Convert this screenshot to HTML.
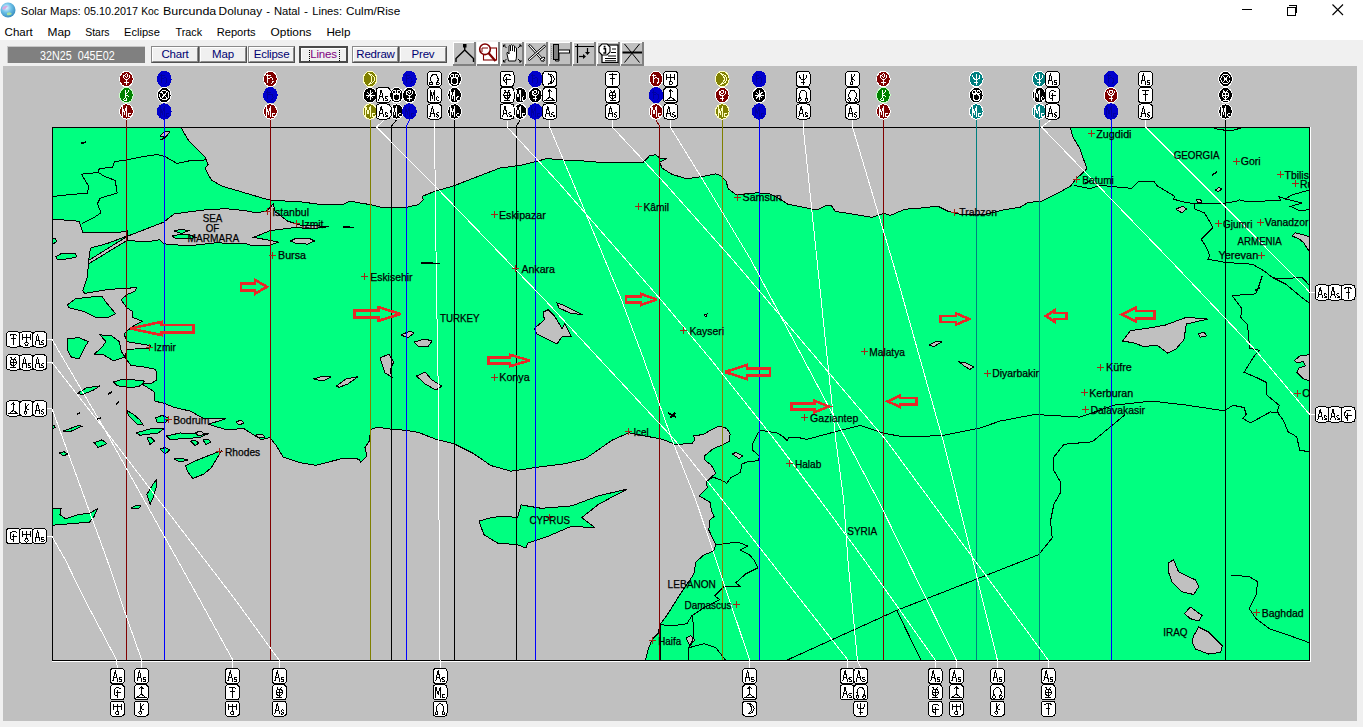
<!DOCTYPE html>
<html><head><meta charset="utf-8"><title>Solar Maps</title>
<style>
html,body{margin:0;padding:0;width:1363px;height:727px;overflow:hidden;background:#f0f0f0;font-family:"Liberation Sans",sans-serif;}
#title{position:absolute;left:0;top:0;width:1363px;height:22px;}
#menu{position:absolute;left:0;top:0;width:1363px;height:40px;background:#fff;}
.mi{position:absolute;top:2.5px;font-size:12px;color:#000;}
#tb{position:absolute;left:0;top:40px;width:1363px;height:26px;background:#f0f0f0;}
svg{position:absolute;left:0;top:0;}
</style></head><body>

<div id="menu"></div>
<div id="title"><svg width="16" height="16" style="position:absolute;left:0px;top:2px" viewBox="0 0 16 16"><defs><radialGradient id="gl" cx="40%" cy="35%" r="65%"><stop offset="0" stop-color="#e8f4ff"/><stop offset="0.5" stop-color="#6cc0e8"/><stop offset="1" stop-color="#3a8fc0"/></radialGradient></defs><circle cx="8" cy="8" r="7.5" fill="url(#gl)"/><path d="M2 6 Q5 3 8 4 Q6 7 3 8Z" fill="#d8a8e0"/><path d="M7 11 Q10 9 12 12 Q9 14 7 13Z" fill="#a8e0a0"/></svg><svg width="420" height="40" style="position:absolute;left:0;top:0" font-family="Liberation Sans, sans-serif" font-size="11.5" fill="#000"><text x="20.7" y="14.5" textLength="26.1" lengthAdjust="spacingAndGlyphs">Solar</text><text x="50" y="14.5" textLength="30.7" lengthAdjust="spacingAndGlyphs">Maps:</text><text x="83.9" y="14.5" textLength="54.1" lengthAdjust="spacingAndGlyphs">05.10.2017</text><text x="141.2" y="14.5" textLength="17.8" lengthAdjust="spacingAndGlyphs">Koc</text><text x="163" y="14.5" textLength="53.3" lengthAdjust="spacingAndGlyphs">Burcunda</text><text x="218.6" y="14.5" textLength="43.5" lengthAdjust="spacingAndGlyphs">Dolunay</text><text x="266.2" y="14.5" textLength="3.8" lengthAdjust="spacingAndGlyphs">-</text><text x="273.9" y="14.5" textLength="26.1" lengthAdjust="spacingAndGlyphs">Natal</text><text x="304" y="14.5" textLength="4.0" lengthAdjust="spacingAndGlyphs">-</text><text x="312.2" y="14.5" textLength="29.8" lengthAdjust="spacingAndGlyphs">Lines:</text><text x="346" y="14.5" textLength="54.2" lengthAdjust="spacingAndGlyphs">Culm/Rise</text><text x="4.6" y="35.9" textLength="28.2" lengthAdjust="spacingAndGlyphs">Chart</text><text x="47.5" y="35.9" textLength="23.2" lengthAdjust="spacingAndGlyphs">Map</text><text x="85.2" y="35.9" textLength="24.4" lengthAdjust="spacingAndGlyphs">Stars</text><text x="124.1" y="35.9" textLength="35.7" lengthAdjust="spacingAndGlyphs">Eclipse</text><text x="175.6" y="35.9" textLength="26.5" lengthAdjust="spacingAndGlyphs">Track</text><text x="216.7" y="35.9" textLength="39.0" lengthAdjust="spacingAndGlyphs">Reports</text><text x="270.6" y="35.9" textLength="40.9" lengthAdjust="spacingAndGlyphs">Options</text><text x="326.4" y="35.9" textLength="24.1" lengthAdjust="spacingAndGlyphs">Help</text></svg><div style="position:absolute;left:1242px;top:9px;width:10px;height:1px;background:#000"></div><div style="position:absolute;left:1287px;top:7px;width:7px;height:7px;border:1px solid #000;background:#fff"></div><div style="position:absolute;left:1289px;top:5px;width:7px;height:7px;border-top:1px solid #000;border-right:1px solid #000;"></div><svg width="12" height="12" style="position:absolute;left:1332px;top:4px" viewBox="0 0 12 12"><path d="M0.5 0.5 L11 11 M11 0.5 L0.5 11" stroke="#000" stroke-width="1.1"/></svg></div>
<div id="tb"></div><div style="position:absolute;left:7px;top:46px;width:138px;height:17px;background:#808080;border-top:1px solid #c8c8c8;border-left:1px solid #c8c8c8;box-sizing:border-box;color:#fff;font-size:12.5px;line-height:16px;"><span style="position:absolute;left:32px;top:0.5px;transform:scaleX(0.86);transform-origin:0 0;white-space:nowrap">32N25&nbsp;&nbsp;045E02</span></div><div style="position:absolute;left:151px;top:46px;width:48px;height:17px;box-sizing:border-box;border:1px solid #8a8a8a;border-right-color:#505050;border-bottom-color:#505050;background:#f0f0f0;"><div style="position:absolute;left:0;top:0;right:0;bottom:0;border-top:1px solid #fff;border-left:1px solid #fff;border-right:1px solid #8a8a8a;border-bottom:1px solid #8a8a8a"></div><div style="position:absolute;left:0;top:0;width:100%;text-align:center;font-size:11.5px;line-height:15px;color:#000070;letter-spacing:-0.2px">Chart</div></div><div style="position:absolute;left:199px;top:46px;width:48px;height:17px;box-sizing:border-box;border:1px solid #8a8a8a;border-right-color:#505050;border-bottom-color:#505050;background:#f0f0f0;"><div style="position:absolute;left:0;top:0;right:0;bottom:0;border-top:1px solid #fff;border-left:1px solid #fff;border-right:1px solid #8a8a8a;border-bottom:1px solid #8a8a8a"></div><div style="position:absolute;left:0;top:0;width:100%;text-align:center;font-size:11.5px;line-height:15px;color:#000070;letter-spacing:-0.2px">Map</div></div><div style="position:absolute;left:248px;top:46px;width:47px;height:17px;box-sizing:border-box;border:1px solid #8a8a8a;border-right-color:#505050;border-bottom-color:#505050;background:#f0f0f0;"><div style="position:absolute;left:0;top:0;right:0;bottom:0;border-top:1px solid #fff;border-left:1px solid #fff;border-right:1px solid #8a8a8a;border-bottom:1px solid #8a8a8a"></div><div style="position:absolute;left:0;top:0;width:100%;text-align:center;font-size:11.5px;line-height:15px;color:#000070;letter-spacing:-0.2px">Eclipse</div></div><div style="position:absolute;left:299px;top:46px;width:49px;height:17px;box-sizing:border-box;border:2px solid #4a4a4a;background:#f0f0f0;"><div style="position:absolute;left:0;top:0;right:0;bottom:0;border-top:1px solid #fff;border-left:1px solid #fff;"></div><span style="position:absolute;left:8px;top:2px;width:29px;height:11px;border-left:1px dotted #000;border-right:1px dotted #000"></span><div style="position:absolute;left:0;top:0;width:100%;text-align:center;font-size:11.5px;line-height:13px;color:#800080;letter-spacing:-0.2px">Lines</div></div><div style="position:absolute;left:352px;top:46px;width:47px;height:17px;box-sizing:border-box;border:1px solid #8a8a8a;border-right-color:#505050;border-bottom-color:#505050;background:#f0f0f0;"><div style="position:absolute;left:0;top:0;right:0;bottom:0;border-top:1px solid #fff;border-left:1px solid #fff;border-right:1px solid #8a8a8a;border-bottom:1px solid #8a8a8a"></div><div style="position:absolute;left:0;top:0;width:100%;text-align:center;font-size:11.5px;line-height:15px;color:#000070;letter-spacing:-0.2px">Redraw</div></div><div style="position:absolute;left:399px;top:46px;width:48px;height:17px;box-sizing:border-box;border:1px solid #8a8a8a;border-right-color:#505050;border-bottom-color:#505050;background:#f0f0f0;"><div style="position:absolute;left:0;top:0;right:0;bottom:0;border-top:1px solid #fff;border-left:1px solid #fff;border-right:1px solid #8a8a8a;border-bottom:1px solid #8a8a8a"></div><div style="position:absolute;left:0;top:0;width:100%;text-align:center;font-size:11.5px;line-height:15px;color:#000070;letter-spacing:-0.2px">Prev</div></div><svg width="23" height="24" style="position:absolute;left:453px;top:42px" viewBox="0 0 23 24"><rect x="0" y="0" width="23" height="24" fill="#c0c0c0"/><rect x="0" y="0" width="23" height="1" fill="#fff"/><rect x="0" y="0" width="1" height="24" fill="#fff"/><rect x="0" y="22" width="23" height="2" fill="#808080"/><rect x="21" y="0" width="2" height="24" fill="#808080"/><rect x="10" y="2" width="3.5" height="3.5" fill="#000"/><path d="M11.75 5 V8 L3 16.5 V20 M11.75 8 L20.5 16.5 V20" fill="none" stroke="#000" stroke-width="1.4"/></svg><svg width="23" height="24" style="position:absolute;left:477px;top:42px" viewBox="0 0 23 24"><rect x="0" y="0" width="23" height="24" fill="#ffffff"/><rect x="0" y="0" width="23" height="1" fill="#fff"/><rect x="0" y="0" width="1" height="24" fill="#fff"/><rect x="0" y="22" width="23" height="2" fill="#808080"/><rect x="21" y="0" width="2" height="24" fill="#808080"/><rect x="6.5" y="6" width="13" height="12" fill="none" stroke="#800000" stroke-width="1.1"/><circle cx="8" cy="7.3" r="5.3" fill="#fff" stroke="#800000" stroke-width="1.6"/><path d="M11.5 11 L18.5 19" stroke="#800000" stroke-width="2.2"/><path d="M5 6 H11 M5 6 V10" stroke="#800000" stroke-width="1"/></svg><svg width="23" height="24" style="position:absolute;left:501px;top:42px" viewBox="0 0 23 24"><rect x="0" y="0" width="23" height="24" fill="#c0c0c0"/><rect x="0" y="0" width="23" height="1" fill="#fff"/><rect x="0" y="0" width="1" height="24" fill="#fff"/><rect x="0" y="22" width="23" height="2" fill="#808080"/><rect x="21" y="0" width="2" height="24" fill="#808080"/><path d="M7.5 19 L6 12 Q5.5 10 7 10.5 L8 12 V4 Q8.5 2.5 9.5 4 V9 V3.5 Q10.5 2 11.5 3.5 V9 V4 Q12.5 2.5 13.5 4 V9.5 V6 Q14.5 4.5 15.5 6 V14 Q15.5 17 14.5 19 Z" fill="#fff" stroke="#000" stroke-width="1"/><path d="M2.5 3 L5.5 6 M2.5 3 H4.5 M2.5 3 V5 M20 3 L17 6 M20 3 H18 M20 3 V5 M2.5 20 L5.5 17 M2.5 20 H4.5 M2.5 20 V18 M20 20 L17 17 M20 20 H18 M20 20 V18" fill="none" stroke="#000" stroke-width="1"/></svg><svg width="23" height="24" style="position:absolute;left:525px;top:42px" viewBox="0 0 23 24"><rect x="0" y="0" width="23" height="24" fill="#c0c0c0"/><rect x="0" y="0" width="23" height="1" fill="#fff"/><rect x="0" y="0" width="1" height="24" fill="#fff"/><rect x="0" y="22" width="23" height="2" fill="#808080"/><rect x="21" y="0" width="2" height="24" fill="#808080"/><path d="M3.5 3.5 L5 2.5 L19.5 18.5 L18 19.5 Z" fill="#fff" stroke="#000" stroke-width="1"/><path d="M19.5 3 L20.5 4.5 L4.5 18.5 L3 17.5 Z" fill="#fff" stroke="#000" stroke-width="1"/><path d="M15 17 L19 15 L20 16 L17 19.5Z" fill="#fff" stroke="#000" stroke-width="1"/></svg><svg width="23" height="24" style="position:absolute;left:549px;top:42px" viewBox="0 0 23 24"><rect x="0" y="0" width="23" height="24" fill="#c0c0c0"/><rect x="0" y="0" width="23" height="1" fill="#fff"/><rect x="0" y="0" width="1" height="24" fill="#fff"/><rect x="0" y="22" width="23" height="2" fill="#808080"/><rect x="21" y="0" width="2" height="24" fill="#808080"/><rect x="4.5" y="2.5" width="5" height="15" fill="#808080" stroke="#000" stroke-width="1"/><rect x="9.5" y="8" width="11" height="3" fill="#fff" stroke="#000" stroke-width="1"/><path d="M6.5 17.5 V19 H10 V11" fill="none" stroke="#000" stroke-width="1"/><path d="M2.5 4 V17" stroke="#909090" stroke-width="1" stroke-dasharray="1 1"/></svg><svg width="23" height="24" style="position:absolute;left:573px;top:42px" viewBox="0 0 23 24"><rect x="0" y="0" width="23" height="24" fill="#c0c0c0"/><rect x="0" y="0" width="23" height="1" fill="#fff"/><rect x="0" y="0" width="1" height="24" fill="#fff"/><rect x="0" y="22" width="23" height="2" fill="#808080"/><rect x="21" y="0" width="2" height="24" fill="#808080"/><path d="M4.5 2 V21 M2 4.5 H21" stroke="#000" stroke-width="1.2"/><path d="M14.5 6 V11" stroke="#000" stroke-width="1.2"/><path d="M12 10 H17 L14.5 13 Z" fill="#000"/><path d="M6 14.5 H11" stroke="#000" stroke-width="1.2"/><path d="M10 12 V17 L13 14.5 Z" fill="#000"/></svg><svg width="23" height="24" style="position:absolute;left:597px;top:42px" viewBox="0 0 23 24"><rect x="0" y="0" width="23" height="24" fill="#c0c0c0"/><rect x="0" y="0" width="23" height="1" fill="#fff"/><rect x="0" y="0" width="1" height="24" fill="#fff"/><rect x="0" y="22" width="23" height="2" fill="#808080"/><rect x="21" y="0" width="2" height="24" fill="#808080"/><rect x="5" y="3" width="16" height="17.5" fill="#fff" stroke="#000" stroke-width="1.2"/><path d="M11 14 H19 M8 16.5 H19 M8 18.8 H19 M14 10.5 H19 M15 7 H19" stroke="#000" stroke-width="1.1"/><path d="M5 2 H10 L13 5 V10 L10 13 H5 L2 10 V5 Z" fill="#fff" stroke="#000" stroke-width="1.1"/><rect x="6.7" y="3.8" width="1.8" height="1.8" fill="#000"/><path d="M6.5 6.8 H8.5 V11 M6.3 11 H9.3" stroke="#000" stroke-width="1.4" fill="none"/></svg><svg width="23" height="24" style="position:absolute;left:621px;top:42px" viewBox="0 0 23 24"><rect x="0" y="0" width="23" height="24" fill="#c0c0c0"/><rect x="0" y="0" width="23" height="1" fill="#fff"/><rect x="0" y="0" width="1" height="24" fill="#fff"/><rect x="0" y="22" width="23" height="2" fill="#808080"/><rect x="21" y="0" width="2" height="24" fill="#808080"/><path d="M3.5 2 L18.5 20.5 M18.5 2 L3.5 20.5" stroke="#000" stroke-width="1"/><path d="M1.5 10.5 H21" stroke="#000" stroke-width="2"/></svg>
<svg width="1363" height="727" viewBox="0 0 1363 727" style="top:0;left:0" shape-rendering="crispEdges">
<rect x="3" y="66" width="1354" height="655" fill="#c0c0c0"/>
<defs><clipPath id="mc"><rect x="52" y="127" width="1258" height="534"/></clipPath></defs>
<g clip-path="url(#mc)" shape-rendering="crispEdges">
<rect x="52" y="127" width="1258" height="534" fill="#00ff80"/>
<polygon points="180.5,126.0 181.4,128.3 188.6,140.6 205.1,157.1 208.2,164.4 205.1,168.5 211.3,179.8 221.6,186.0 246.4,193.3 267.0,199.4 273.2,200.5 300.0,201.7 321.1,204.6 342.3,204.6 350.5,201.1 358.7,202.8 370.4,204.6 382.2,207.5 405.6,207.5 418.5,204.6 423.2,199.9 422.1,196.4 433.8,191.7 454.4,185.6 472.9,178.4 499.6,168.1 522.2,165.0 534.5,162.0 546.8,158.5 563.3,160.0 583.8,161.0 608.4,163.0 624.9,162.0 643.4,162.0 649.5,155.8 655.7,154.8 659.8,157.9 666.0,158.9 659.8,162.0 661.9,168.1 672.1,174.3 686.5,178.8 703.0,176.4 715.3,173.9 720.0,175.3 726.2,181.5 728.2,188.7 736.4,194.8 757.0,192.8 769.3,193.8 781.6,200.0 787.8,204.1 812.4,209.2 818.6,209.2 826.8,205.1 832.0,206.1 835.0,211.3 847.4,213.3 872.0,217.4 884.3,213.3 890.5,215.4 904.9,209.2 919.3,208.2 937.8,206.1 948.0,211.3 960.7,214.4 984.9,214.4 1001.1,210.4 1020.4,207.1 1028.5,202.3 1041.4,201.5 1057.6,193.4 1070.5,186.1 1075.3,179.7 1085.0,170.8 1086.9,168.4 1082.2,155.5 1079.8,148.5 1072.8,136.7 1070.4,127.8 1070.0,126.0" fill="#c0c0c0" stroke="#000" stroke-width="1"/>
<polygon points="126.7,236.5 163.8,222.1 174.1,213.9 205.1,209.8 225.7,208.7 246.4,210.8 256.7,212.9 267.0,210.8 273.2,204.0 275.2,211.8 287.6,221.1 300.0,225.0 329.4,226.5 314.7,228.5 293.3,227.7 270.2,230.6 253.8,237.3 278.9,242.2 270.2,245.0 250.0,245.0 246.4,243.8 215.4,242.8 188.6,245.9 163.8,243.8 159.7,239.7 147.3,241.7 126.7,240.5" fill="#c0c0c0" stroke="#000" stroke-width="1"/>
<polygon points="88.5,260.5 127.0,236.5 127.0,240.5 89.0,263.5" fill="#c0c0c0" stroke="#000" stroke-width="1"/>
<polygon points="51.0,219.0 78.9,221.2 80.8,226.0 82.7,232.7 107.8,232.7 125.1,231.8 127.0,230.8 127.0,236.0 107.8,243.3 90.4,248.1 88.5,261.6 87.5,277.0 82.7,290.5 84.7,293.4 107.8,289.5 136.7,287.6 134.7,291.5 127.0,294.4 121.2,300.0 127.0,307.8 132.8,311.7 132.8,317.5 142.4,321.3 134.7,325.2 127.0,331.0 124.0,334.0 127.0,341.6 150.0,345.5 150.0,348.0 127.0,349.5 125.0,357.0 130.9,365.6 142.4,366.6 155.9,369.5 156.9,380.0 150.0,384.0 140.5,383.0 154.0,391.6 155.0,401.2 163.6,403.2 173.2,407.0 181.0,409.0 190.0,411.0 204.0,418.7 226.0,418.7 208.5,424.2 226.0,429.7 243.7,428.6 261.3,439.6 270.0,437.4 276.7,446.2 283.3,457.2 300.0,462.7 315.6,465.3 327.9,462.2 344.3,458.0 358.7,459.1 360.8,462.2 367.0,456.0 364.9,447.8 369.0,441.6 371.0,429.3 377.2,427.2 391.6,429.3 406.0,430.3 418.3,432.4 436.8,439.6 453.6,443.6 473.8,453.7 490.7,465.5 510.9,471.2 537.9,467.2 564.8,463.8 585.0,458.8 595.2,452.0 612.0,440.2 628.9,432.8 640.0,435.1 659.3,438.6 666.1,440.6 675.8,444.8 681.3,444.1 692.3,443.4 695.0,439.3 693.6,435.8 699.1,435.1 704.6,433.8 711.5,429.6 718.4,426.2 726.7,428.3 730.1,433.8 729.4,441.3 722.5,444.8 712.9,448.9 704.6,455.8 704.6,459.9 711.5,465.4 715.7,473.6 710.2,477.8 706.0,481.9 707.4,487.4 703.3,491.5 699.1,495.7 710.2,502.5 711.5,510.8 714.3,516.3 710.0,520.0 708.8,530.0 715.8,545.0 713.8,551.0 703.8,555.0 695.9,561.9 693.9,573.9 685.9,585.8 677.9,597.8 667.9,613.8 660.0,624.7 658.0,633.7 652.0,639.7 648.0,649.7 645.0,662.0 51.0,662.0" fill="#c0c0c0" stroke="#000" stroke-width="1"/>
<polygon points="50.0,239.0 55.0,238.5 57.0,241.0 54.0,243.3 50.0,243.0" fill="#00ff80" stroke="#000" stroke-width="1"/>
<polygon points="50.0,426.0 54.0,425.5 55.5,427.5 52.0,428.5 50.0,428.0" fill="#00ff80" stroke="#000" stroke-width="1"/>
<polygon points="55.8,256.8 61.5,253.5 75.0,253.0 77.0,256.8 69.3,258.7 57.7,259.7" fill="#00ff80" stroke="#000" stroke-width="1"/>
<polygon points="67.3,305.0 75.0,299.0 88.5,297.2 102.0,296.3 105.8,302.0 115.5,313.6 107.8,317.5 96.2,317.5 84.7,311.7 69.3,307.8" fill="#00ff80" stroke="#000" stroke-width="1"/>
<polygon points="67.3,338.7 78.9,337.7 88.5,341.6 84.7,347.3 78.9,358.9 71.2,357.0 67.3,349.3" fill="#00ff80" stroke="#000" stroke-width="1"/>
<polygon points="100.0,334.8 111.6,335.8 119.3,341.6 121.2,351.2 125.0,357.0 113.5,360.8 104.0,355.0 94.3,354.0 102.0,347.3 105.8,341.6" fill="#00ff80" stroke="#000" stroke-width="1"/>
<polygon points="113.5,382.0 121.2,379.7 134.7,380.0 144.4,381.0 140.5,385.8 130.9,387.8 117.4,385.8" fill="#00ff80" stroke="#000" stroke-width="1"/>
<polygon points="77.0,393.5 86.6,387.8 100.0,385.8 94.3,389.7 82.7,394.5" fill="#00ff80" stroke="#000" stroke-width="1"/>
<polygon points="63.5,431.0 78.9,425.3 81.8,426.3 69.3,432.0" fill="#00ff80" stroke="#000" stroke-width="1"/>
<polygon points="94.3,442.7 102.0,439.8 106.8,443.6 98.1,447.5" fill="#00ff80" stroke="#000" stroke-width="1"/>
<polygon points="166.6,436.0 180.0,433.0 208.5,433.5 200.0,437.5 170.0,439.6" fill="#00ff80" stroke="#000" stroke-width="1"/>
<polygon points="135.8,433.0 150.0,429.0 164.4,428.6 158.0,433.0 140.0,435.2" fill="#00ff80" stroke="#000" stroke-width="1"/>
<polygon points="155.6,418.0 162.0,415.4 168.8,418.0 166.0,422.0 157.0,422.0" fill="#00ff80" stroke="#000" stroke-width="1"/>
<polygon points="221.6,450.7 210.0,455.0 195.0,461.0 185.5,466.0 188.0,472.0 192.7,478.6 204.0,474.0 211.0,468.0 216.0,460.0" fill="#00ff80" stroke="#000" stroke-width="1"/>
<polygon points="126.7,410.5 133.0,414.0 140.0,420.0 143.0,425.0 137.0,424.0 129.0,416.0" fill="#00ff80" stroke="#000" stroke-width="1"/>
<polygon points="147.3,438.0 151.0,437.3 154.5,441.0 150.0,444.5" fill="#00ff80" stroke="#000" stroke-width="1"/>
<polygon points="190.6,441.0 195.0,440.4 199.0,443.0 195.0,445.5" fill="#00ff80" stroke="#000" stroke-width="1"/>
<polygon points="203.0,440.0 208.0,439.4 211.0,442.0 206.0,444.5" fill="#00ff80" stroke="#000" stroke-width="1"/>
<polygon points="159.7,449.0 165.0,447.6 170.0,450.0 165.0,453.8" fill="#00ff80" stroke="#000" stroke-width="1"/>
<polygon points="174.0,459.0 180.0,458.0 187.5,460.0 180.0,462.0" fill="#00ff80" stroke="#000" stroke-width="1"/>
<polygon points="59.6,453.0 64.0,451.7 67.9,454.0 63.0,456.0" fill="#00ff80" stroke="#000" stroke-width="1"/>
<polygon points="146.8,494.6 153.4,483.6 156.7,479.2 156.7,485.8 153.4,496.8 150.1,504.5" fill="#00ff80" stroke="#000" stroke-width="1"/>
<polygon points="131.4,508.0 136.0,505.6 141.3,506.0 138.0,509.0" fill="#00ff80" stroke="#000" stroke-width="1"/>
<polygon points="50.0,507.8 61.0,508.9 59.9,514.4 65.4,518.8 78.6,514.4 89.6,513.3 97.3,508.9 94.0,516.6 89.6,522.1 76.4,523.2 63.2,524.3 50.0,525.4" fill="#00ff80" stroke="#000" stroke-width="1"/>
<polygon points="478.9,521.1 490.7,517.7 504.1,516.0 517.6,517.7 521.0,504.9 541.2,508.3 571.6,505.9 598.5,495.8 627.2,489.1 598.5,504.3 581.7,517.7 595.2,527.9 571.6,526.2 548.0,536.3 527.7,543.0 526.0,548.1 517.6,544.7 497.4,543.0 483.9,534.6" fill="#00ff80" stroke="#000" stroke-width="1"/>
<polygon points="174.0,231.0 181.0,229.4 188.6,230.5 182.0,233.5" fill="#00ff80" stroke="#000" stroke-width="1"/>
<polygon points="172.0,236.0 180.0,234.5 190.0,235.0 196.0,237.5 188.0,239.0 176.0,238.5" fill="#00ff80" stroke="#000" stroke-width="1"/>
<polygon points="534.2,328.7 544.4,319.8 543.1,312.2 548.2,309.6 554.5,316.0 562.2,328.7 564.7,323.6 571.1,336.4 562.2,336.4 557.1,344.0 546.9,338.9 536.7,333.8" fill="#c0c0c0" stroke="#000" stroke-width="1"/>
<polygon points="557.0,303.0 563.0,305.0 575.0,311.0 582.5,314.7 570.0,313.0 559.0,308.0" fill="#c0c0c0" stroke="#000" stroke-width="1"/>
<polygon points="1122.5,341.2 1130.5,330.6 1149.0,328.0 1165.0,325.2 1186.4,317.3 1207.7,319.1 1186.4,324.0 1183.8,339.9 1175.8,349.2 1167.8,353.2 1157.0,345.2 1143.8,346.6 1133.0,342.6" fill="#c0c0c0" stroke="#000" stroke-width="1"/>
<polygon points="1198.4,334.0 1204.0,331.9 1206.4,336.0 1200.0,337.2" fill="#c0c0c0" stroke="#000" stroke-width="1"/>
<polygon points="1292.0,236.1 1295.4,232.8 1305.3,235.3 1311.0,238.0 1311.0,254.0 1303.6,242.7 1298.7,238.6" fill="#c0c0c0" stroke="#000" stroke-width="1"/>
<polygon points="1294.5,360.3 1300.0,355.9 1308.8,354.8 1311.0,354.8 1311.0,381.1 1303.3,378.9 1296.7,372.3 1298.9,368.0 1305.5,365.8 1303.3,361.8 1296.7,362.5" fill="#c0c0c0" stroke="#000" stroke-width="1"/>
<polygon points="414.0,342.0 425.0,339.0 432.0,341.0 428.0,346.6 418.0,346.0" fill="#c0c0c0" stroke="#000" stroke-width="1"/>
<polygon points="416.6,376.0 425.0,372.0 432.0,380.0 442.0,386.0 436.0,390.0 425.0,384.0" fill="#c0c0c0" stroke="#000" stroke-width="1"/>
<polygon points="380.0,358.0 389.0,354.0 393.7,362.0 390.0,370.0 392.0,377.0 385.0,373.0 382.0,364.0" fill="#c0c0c0" stroke="#000" stroke-width="1"/>
<polygon points="401.0,335.0 410.0,331.0 414.0,333.0 408.0,337.7" fill="#c0c0c0" stroke="#000" stroke-width="1"/>
<polygon points="313.6,379.0 323.0,376.0 331.4,377.0 323.0,381.0" fill="#c0c0c0" stroke="#000" stroke-width="1"/>
<polygon points="336.5,386.0 346.0,379.0 358.0,376.6 348.0,384.0 339.0,387.3" fill="#c0c0c0" stroke="#000" stroke-width="1"/>
<polygon points="1168.4,563.1 1173.5,559.8 1178.5,571.6 1195.4,580.0 1198.7,586.7 1193.7,594.5 1181.9,591.8 1171.8,581.7 1168.4,571.6" fill="#c0c0c0" stroke="#000" stroke-width="1"/>
<polygon points="1184.6,613.7 1190.3,607.0 1202.0,615.4 1198.7,621.0 1190.3,618.7" fill="#c0c0c0" stroke="#000" stroke-width="1"/>
<polygon points="1193.7,635.6 1198.7,627.1 1208.8,632.2 1222.3,645.7 1220.6,652.4 1208.8,654.1 1195.4,649.0 1192.0,642.3" fill="#c0c0c0" stroke="#000" stroke-width="1"/>
<polygon points="290.4,241.0 296.0,238.3 310.0,238.8 314.5,241.0 308.0,244.1 296.0,243.5" fill="#c0c0c0" stroke="#000" stroke-width="1"/>
<polygon points="732.2,454.0 736.0,452.3 742.5,456.0 739.0,458.5" fill="#c0c0c0" stroke="#000" stroke-width="1"/>
<polygon points="160.0,136.0 165.0,131.0 170.0,132.0 166.0,136.5" fill="#c0c0c0" stroke="#000" stroke-width="1"/>
<polygon points="195.0,433.0 200.0,431.0 205.0,434.0 199.0,436.0" fill="#c0c0c0" stroke="#000" stroke-width="1"/>
<polygon points="236.0,422.0 241.0,420.0 244.0,423.0 239.0,425.0" fill="#c0c0c0" stroke="#000" stroke-width="1"/>
<polygon points="256.0,435.0 262.0,434.0 265.0,437.0 259.0,438.0" fill="#c0c0c0" stroke="#000" stroke-width="1"/>
<polygon points="929.0,345.0 936.0,341.4 941.8,342.0 934.0,346.5" fill="#c0c0c0" stroke="#000" stroke-width="1"/>
<polygon points="959.6,362.0 966.0,363.0 973.6,367.0 970.0,369.4 964.0,366.0" fill="#c0c0c0" stroke="#000" stroke-width="1"/>
<polygon points="704.0,315.0 707.0,314.0 706.0,317.0" fill="#c0c0c0" stroke="#000" stroke-width="1"/>
<polygon points="1196.0,200.0 1200.0,199.0 1202.0,202.0 1198.0,202.5" fill="#c0c0c0" stroke="#000" stroke-width="1"/>
<polygon points="1175.7,209.0 1183.0,206.4 1186.4,209.0 1182.0,213.0" fill="#c0c0c0" stroke="#000" stroke-width="1"/>
<polygon points="1215.3,190.0 1219.0,187.4 1221.9,189.0 1218.0,191.6" fill="#c0c0c0" stroke="#000" stroke-width="1"/>
<polygon points="686.0,638.0 691.0,635.7 694.6,640.0 690.0,645.8" fill="#c0c0c0" stroke="#000" stroke-width="1"/>
<polyline points="715.8,545.0 737.8,542.0 747.7,546.0 739.8,550.0 749.7,555.0 754.7,561.0 757.7,567.9 745.7,573.9 735.8,582.8 740.7,586.8 723.8,586.8 714.8,595.8 719.8,599.8 703.8,607.8 691.9,615.8 686.9,623.7 673.9,625.7 660.0,624.7" fill="none" stroke="#000" stroke-width="1"/>
<polyline points="691.9,615.8 693.9,627.7 692.9,639.7 688.9,647.7 688.9,661.0" fill="none" stroke="#000" stroke-width="1"/>
<polyline points="688.9,647.7 703.8,643.7 715.8,647.7 723.8,657.7 726.0,661.0" fill="none" stroke="#000" stroke-width="1"/>
<polyline points="660.0,624.7 660.0,661.0" fill="none" stroke="#000" stroke-width="1"/>
<polyline points="52.0,196.6 67.9,194.8 87.6,193.0 88.5,185.8 81.3,174.2 98.3,172.4 99.2,168.8 112.6,167.0 114.4,161.7 126.9,159.9 144.8,156.3 157.3,154.5 164.5,156.3 177.0,163.5 189.5,160.8 205.6,159.9" fill="none" stroke="#000" stroke-width="1"/>
<polyline points="98.3,172.4 103.7,176.0 115.3,180.5 117.1,193.0 100.1,198.3 97.4,203.7 101.0,212.7 94.7,217.1 82.2,223.4" fill="none" stroke="#000" stroke-width="1"/>
<polyline points="706.0,481.9 712.9,477.1 722.5,480.5 726.7,483.3 730.8,477.8 736.3,475.0 740.4,472.3 741.8,464.0 747.3,462.0 758.3,460.6 759.7,456.5 752.8,450.3 752.8,443.4 758.3,432.4 761.0,430.3 777.5,433.1 783.1,436.5 787.2,440.6 788.6,437.9 800.0,437.9 806.9,439.4 834.9,431.8 860.3,425.4 883.3,433.1 903.6,436.9 941.8,435.6 980.0,428.0 1000.0,421.1 1034.6,414.5 1079.9,417.1 1114.5,405.1 1151.8,401.1 1186.4,405.1 1224.2,410.8 1233.0,405.3 1244.0,407.5 1246.2,414.1 1242.9,418.5 1250.6,422.9 1270.4,411.9 1279.2,413.0" fill="none" stroke="#000" stroke-width="1"/>
<polyline points="1125.2,414.5 1094.5,440.0 1091.0,441.9 1064.0,444.3 1053.9,457.0 1053.9,470.5 1060.6,482.3 1060.6,492.4 1053.9,504.2 1050.5,521.0 1052.2,537.9 1038.7,554.7 1000.0,569.9 896.7,610.4 785.0,661.0" fill="none" stroke="#000" stroke-width="1"/>
<polyline points="896.7,610.4 921.4,661.0" fill="none" stroke="#000" stroke-width="1"/>
<polyline points="1230.7,575.0 1249.2,576.6 1257.7,581.7 1256.0,595.1 1249.2,608.6 1256.0,618.7 1269.4,628.8 1289.7,635.6 1308.2,642.3 1311.0,643.0" fill="none" stroke="#000" stroke-width="1"/>
<polyline points="1073.7,185.3 1089.9,188.6 1100.0,185.3 1131.5,188.4 1138.5,181.4 1153.8,181.4 1157.3,186.0 1160.0,187.4 1174.9,196.5 1173.2,199.0 1181.5,201.5 1194.7,203.9 1214.5,203.9 1224.4,203.1 1235.9,201.5 1239.2,199.8 1245.8,201.5 1280.5,200.6 1278.9,196.5 1285.5,199.0 1292.0,194.9 1311.0,189.5" fill="none" stroke="#000" stroke-width="1"/>
<polyline points="1285.5,199.0 1292.0,200.6 1302.0,203.1 1290.4,206.4 1298.7,210.5 1311.0,209.7" fill="none" stroke="#000" stroke-width="1"/>
<polyline points="1213.7,128.5 1230.0,131.0 1244.0,127.3" fill="none" stroke="#000" stroke-width="1"/>
<polyline points="1194.7,203.9 1194.7,208.9 1204.6,213.0 1209.5,221.3 1212.8,227.9 1207.9,232.8 1201.3,239.4 1204.6,244.4 1207.9,251.0 1209.5,255.9 1207.9,259.2 1226.0,262.5 1252.4,264.2 1264.0,270.8 1272.2,277.4 1285.5,284.0 1295.4,292.2 1303.6,298.9 1311.0,304.0" fill="none" stroke="#000" stroke-width="1"/>
<polyline points="1262.3,275.7 1259.0,285.6 1255.7,293.9 1232.6,295.5" fill="none" stroke="#000" stroke-width="1"/>
<polyline points="1272.2,277.4 1278.9,279.0 1302.0,277.4 1311.0,287.0" fill="none" stroke="#000" stroke-width="1"/>
<polyline points="1231.9,295.4 1241.8,308.6 1240.7,317.4 1247.3,324.0 1248.4,332.8 1249.5,348.2 1259.4,350.4 1255.0,354.8 1244.0,372.3 1257.2,377.8 1266.0,382.2 1266.0,394.3 1279.2,405.3 1277.0,411.9 1283.6,420.7 1288.0,431.7 1296.7,436.8 1299.8,450.3 1311.0,452.0" fill="none" stroke="#000" stroke-width="1"/>
</g>
<g shape-rendering="crispEdges">
<rect x="52" y="127" width="1258" height="1" fill="#000"/>
<rect x="52" y="127" width="1" height="534" fill="#000"/>
<rect x="1309" y="127" width="1" height="534" fill="#000"/>
<rect x="52" y="660" width="1258" height="1" fill="#000"/>
<rect x="1310" y="127" width="1" height="535" fill="#fff"/>
<rect x="52" y="661" width="1259" height="1" fill="#fff"/>
</g>
<polyline points="126.4,119 126.4,120 126.5,126 126.5,660" fill="none" stroke="#800000" stroke-width="1"/>
<polyline points="164.3,119 164.3,120 164.5,126 164.5,660" fill="none" stroke="#0000ff" stroke-width="1"/>
<polyline points="270.4,119 270.4,120 270.5,126 270.5,660" fill="none" stroke="#800000" stroke-width="1"/>
<polyline points="370.0,119 370.0,120 370.5,126 370.5,660" fill="none" stroke="#808000" stroke-width="1"/>
<polyline points="396.5,119 396.5,120 391.5,126 391.5,660" fill="none" stroke="#000000" stroke-width="1"/>
<polyline points="409.4,119 409.4,120 406.5,126 406.5,660" fill="none" stroke="#0000ff" stroke-width="1"/>
<polyline points="454.6,119 454.6,120 454.5,126 454.5,660" fill="none" stroke="#000000" stroke-width="1"/>
<polyline points="520.0,119 520.0,120 516.5,126 516.5,660" fill="none" stroke="#000000" stroke-width="1"/>
<polyline points="535.3,119 535.3,120 535.5,126 535.5,660" fill="none" stroke="#0000ff" stroke-width="1"/>
<polyline points="656.0,119 656.0,120 659.5,126 659.5,660" fill="none" stroke="#800000" stroke-width="1"/>
<polyline points="722.3,119 722.3,120 722.5,126 722.5,660" fill="none" stroke="#808000" stroke-width="1"/>
<polyline points="759.2,119 759.2,120 759.5,126 759.5,660" fill="none" stroke="#0000ff" stroke-width="1"/>
<polyline points="883.4,119 883.4,120 883.5,126 883.5,660" fill="none" stroke="#800000" stroke-width="1"/>
<polyline points="976.3,119 976.3,120 976.5,126 976.5,660" fill="none" stroke="#008080" stroke-width="1"/>
<polyline points="1039.2,119 1039.2,120 1039.5,126 1039.5,660" fill="none" stroke="#008080" stroke-width="1"/>
<polyline points="1111.0,119 1111.0,120 1111.5,126 1111.5,660" fill="none" stroke="#0000ff" stroke-width="1"/>
<polyline points="1225.5,119 1225.5,120 1225.5,126 1225.5,660" fill="none" stroke="#000000" stroke-width="1"/>
<polyline points="383.2,119.0 383.2,121.0 376.4,127.0 434.0,185.0 544.9,300.0 600.4,360.0 674.7,440.0 722.3,500.0 847.9,660.0 847.1,668.0" fill="none" stroke="#fff" stroke-width="1"/>
<polyline points="434.4,119.0 434.5,127.0 436.6,300.0 437.9,360.0 440.0,660.0 440.1,668.0" fill="none" stroke="#fff" stroke-width="1"/>
<polyline points="507.0,119.0 507.1,127.0 560.7,185.0 661.1,300.0 700.0,346.5 711.3,360.0 775.0,440.0 820.0,500.0 864.4,560.0 935.2,660.0 935.2,668.0" fill="none" stroke="#fff" stroke-width="1"/>
<polyline points="549.8,119.0 549.6,127.0 574.0,185.0 621.5,300.0 644.0,360.0 672.1,440.0 695.8,500.0 749.6,660.0 749.6,668.0" fill="none" stroke="#fff" stroke-width="1"/>
<polyline points="612.6,119.0 612.2,127.0 666.4,185.0 733.0,260.0 886.0,440.0 1048.2,660.0 1048.2,668.0" fill="none" stroke="#fff" stroke-width="1"/>
<polyline points="670.7,119.0 670.3,127.0 706.0,185.0 751.0,260.0 846.4,440.0 878.0,500.0 956.3,660.0 956.3,668.0" fill="none" stroke="#fff" stroke-width="1"/>
<polyline points="803.2,119.0 803.2,127.0 817.0,260.0 835.8,440.0 843.7,500.0 847.9,560.0 857.4,660.0 860.8,668.0" fill="none" stroke="#fff" stroke-width="1"/>
<polyline points="852.6,119.0 852.5,127.0 893.6,265.0 944.3,445.0 997.4,660.0 997.4,668.0" fill="none" stroke="#fff" stroke-width="1"/>
<polyline points="1052.4,119.0 1041.5,127.0 1170.0,260.0 1255.7,350.5 1309.7,414.5 1316.0,414.5" fill="none" stroke="#fff" stroke-width="1"/>
<polyline points="1145.4,119.0 1145.6,127.0 1302.9,284.7 1309.7,292.5 1316.0,292.5" fill="none" stroke="#fff" stroke-width="1"/>
<polyline points="46.0,339.4 52.0,339.4 105.0,430.0 199.8,600.0 232.8,660.0 232.3,668.0" fill="none" stroke="#fff" stroke-width="1"/>
<polyline points="46.0,362.4 52.0,362.4 105.0,430.0 235.5,600.0 279.0,660.0 279.3,668.0" fill="none" stroke="#fff" stroke-width="1"/>
<polyline points="46.0,408.5 52.0,408.8 107.2,560.0 120.6,600.0 141.7,660.0 141.4,668.0" fill="none" stroke="#fff" stroke-width="1"/>
<polyline points="46.0,536.0 52.0,536.4 65.4,560.0 84.9,600.0 116.6,660.0 117.3,668.0" fill="none" stroke="#fff" stroke-width="1"/>
<g clip-path="url(#mc)" font-family="Liberation Sans, sans-serif" font-size="11" fill="#000" stroke="#000" stroke-width="0.25">
<path d="M263.7 211.8 H270.7 M267.2 208.3 V215.3" stroke="#a02818" stroke-width="1" fill="none"/>
<text x="272.2" y="215.8" textLength="36.8" lengthAdjust="spacingAndGlyphs">Istanbul</text>
<path d="M293.2 223.6 H300.2 M296.7 220.1 V227.1" stroke="#a02818" stroke-width="1" fill="none"/>
<text x="301.6" y="227.6" textLength="21.9" lengthAdjust="spacingAndGlyphs">Izmit</text>
<path d="M269.3 255.4 H276.3 M272.8 251.9 V258.9" stroke="#a02818" stroke-width="1" fill="none"/>
<text x="278.0" y="259.4" textLength="28.0" lengthAdjust="spacingAndGlyphs">Bursa</text>
<path d="M361.4 276.6 H368.4 M364.9 273.1 V280.1" stroke="#a02818" stroke-width="1" fill="none"/>
<text x="370.2" y="280.6" textLength="42.4" lengthAdjust="spacingAndGlyphs">Eskisehir</text>
<path d="M145.5 347.0 H152.5 M149.0 343.5 V350.5" stroke="#a02818" stroke-width="1" fill="none"/>
<text x="154.0" y="351.0" textLength="22.0" lengthAdjust="spacingAndGlyphs">Izmir</text>
<path d="M164.9 419.8 H171.9 M168.4 416.3 V423.3" stroke="#a02818" stroke-width="1" fill="none"/>
<text x="173.2" y="423.8" textLength="36.3" lengthAdjust="spacingAndGlyphs">Bodrum</text>
<path d="M216.0 451.7 H223.0 M219.5 448.2 V455.2" stroke="#a02818" stroke-width="1" fill="none"/>
<text x="225.0" y="455.7" textLength="35.2" lengthAdjust="spacingAndGlyphs">Rhodes</text>
<path d="M490.9 214.8 H497.9 M494.4 211.3 V218.3" stroke="#a02818" stroke-width="1" fill="none"/>
<text x="499.0" y="218.8" textLength="46.8" lengthAdjust="spacingAndGlyphs">Eskipazar</text>
<path d="M635.4 206.8 H642.4 M638.9 203.3 V210.3" stroke="#a02818" stroke-width="1" fill="none"/>
<text x="643.4" y="210.8" textLength="25.6" lengthAdjust="spacingAndGlyphs">Kâmil</text>
<path d="M734.0 197.3 H741.0 M737.5 193.8 V200.8" stroke="#a02818" stroke-width="1" fill="none"/>
<text x="742.6" y="201.3" textLength="39.0" lengthAdjust="spacingAndGlyphs">Samsun</text>
<path d="M951.3 212.3 H958.3 M954.8 208.8 V215.8" stroke="#a02818" stroke-width="1" fill="none"/>
<text x="959.3" y="216.3" textLength="37.7" lengthAdjust="spacingAndGlyphs">Trabzon</text>
<path d="M1087.6 133.9 H1094.6 M1091.1 130.4 V137.4" stroke="#a02818" stroke-width="1" fill="none"/>
<text x="1096.3" y="137.9" textLength="35.2" lengthAdjust="spacingAndGlyphs">Zugdidi</text>
<path d="M1072.8 179.5 H1079.8 M1076.3 176.0 V183.0" stroke="#a02818" stroke-width="1" fill="none"/>
<text x="1082.2" y="183.5" textLength="31.7" lengthAdjust="spacingAndGlyphs">Batumi</text>
<path d="M1232.5 161.4 H1239.5 M1236.0 157.9 V164.9" stroke="#a02818" stroke-width="1" fill="none"/>
<text x="1240.7" y="165.4" textLength="19.9" lengthAdjust="spacingAndGlyphs">Gori</text>
<path d="M1276.6 174.8 H1283.6 M1280.1 171.3 V178.3" stroke="#a02818" stroke-width="1" fill="none"/>
<text x="1284.6" y="178.8" textLength="26.6" lengthAdjust="spacingAndGlyphs">Tbilisi</text>
<path d="M1291.9 183.7 H1298.9 M1295.4 180.2 V187.2" stroke="#a02818" stroke-width="1" fill="none"/>
<text x="1300.0" y="187.7" textLength="34.7" lengthAdjust="spacingAndGlyphs">Rustavi</text>
<path d="M1214.9 223.6 H1221.9 M1218.4 220.1 V227.1" stroke="#a02818" stroke-width="1" fill="none"/>
<text x="1223.0" y="227.6" textLength="29.4" lengthAdjust="spacingAndGlyphs">Gjumri</text>
<path d="M1256.7 222.4 H1263.7 M1260.2 218.9 V225.9" stroke="#a02818" stroke-width="1" fill="none"/>
<text x="1264.8" y="226.4" textLength="43.7" lengthAdjust="spacingAndGlyphs">Vanadzor</text>
<path d="M1257.8 255.3 H1264.8 M1261.3 251.8 V258.8" stroke="#a02818" stroke-width="1" fill="none"/>
<text x="1218.4" y="259.3" textLength="39.9" lengthAdjust="spacingAndGlyphs">Yerevan</text>
<path d="M512.1 268.9 H519.1 M515.6 265.4 V272.4" stroke="#a02818" stroke-width="1" fill="none"/>
<text x="521.4" y="272.9" textLength="33.6" lengthAdjust="spacingAndGlyphs">Ankara</text>
<path d="M490.7 377.1 H497.7 M494.2 373.6 V380.6" stroke="#a02818" stroke-width="1" fill="none"/>
<text x="499.3" y="381.1" textLength="30.3" lengthAdjust="spacingAndGlyphs">Konya</text>
<path d="M624.8 431.8 H631.8 M628.3 428.3 V435.3" stroke="#a02818" stroke-width="1" fill="none"/>
<text x="633.4" y="435.8" textLength="15.3" lengthAdjust="spacingAndGlyphs">Icel</text>
<path d="M680.3 330.8 H687.3 M683.8 327.3 V334.3" stroke="#a02818" stroke-width="1" fill="none"/>
<text x="689.4" y="334.8" textLength="34.7" lengthAdjust="spacingAndGlyphs">Kayseri</text>
<path d="M860.7 351.6 H867.7 M864.2 348.1 V355.1" stroke="#a02818" stroke-width="1" fill="none"/>
<text x="869.3" y="355.6" textLength="35.6" lengthAdjust="spacingAndGlyphs">Malatya</text>
<path d="M801.4 417.8 H808.4 M804.9 414.3 V421.3" stroke="#a02818" stroke-width="1" fill="none"/>
<text x="810.0" y="421.8" textLength="48.3" lengthAdjust="spacingAndGlyphs">Gaziantep</text>
<path d="M983.6 373.3 H990.6 M987.1 369.8 V376.8" stroke="#a02818" stroke-width="1" fill="none"/>
<text x="992.2" y="377.3" textLength="46.8" lengthAdjust="spacingAndGlyphs">Diyarbakir</text>
<path d="M1097.2 367.3 H1104.2 M1100.7 363.8 V370.8" stroke="#a02818" stroke-width="1" fill="none"/>
<text x="1106.0" y="371.3" textLength="25.8" lengthAdjust="spacingAndGlyphs">Küfre</text>
<path d="M1081.2 392.6 H1088.2 M1084.7 389.1 V396.1" stroke="#a02818" stroke-width="1" fill="none"/>
<text x="1089.2" y="396.6" textLength="44.0" lengthAdjust="spacingAndGlyphs">Kerburan</text>
<path d="M1081.7 409.7 H1088.7 M1085.2 406.2 V413.2" stroke="#a02818" stroke-width="1" fill="none"/>
<text x="1090.5" y="413.7" textLength="54.6" lengthAdjust="spacingAndGlyphs">Dalavakasir</text>
<path d="M1293.5 393.2 H1300.5 M1297.0 389.7 V396.7" stroke="#a02818" stroke-width="1" fill="none"/>
<text x="1302.3" y="397.2" textLength="49.7" lengthAdjust="spacingAndGlyphs">Oshnavieh</text>
<path d="M786.1 463.8 H793.1 M789.6 460.3 V467.3" stroke="#a02818" stroke-width="1" fill="none"/>
<text x="794.9" y="467.8" textLength="26.4" lengthAdjust="spacingAndGlyphs">Halab</text>
<path d="M733.2 604.7 H740.2 M736.7 601.2 V608.2" stroke="#a02818" stroke-width="1" fill="none"/>
<text x="684.5" y="608.7" textLength="47.1" lengthAdjust="spacingAndGlyphs">Damascus</text>
<path d="M648.9 640.8 H655.9 M652.4 637.3 V644.3" stroke="#a02818" stroke-width="1" fill="none"/>
<text x="658.2" y="644.8" textLength="22.9" lengthAdjust="spacingAndGlyphs">Haifa</text>
<path d="M546.1 517.7 H553.1 M549.6 514.2 V521.2" stroke="#a02818" stroke-width="1" fill="none"/>
<path d="M1252.9 612.7 H1259.9 M1256.4 609.2 V616.2" stroke="#a02818" stroke-width="1" fill="none"/>
<text x="1261.8" y="616.7" textLength="41.8" lengthAdjust="spacingAndGlyphs">Baghdad</text>
<text x="1173.7" y="159.0" fill="#000" textLength="45.8" lengthAdjust="spacingAndGlyphs">GEORGIA</text>
<text x="1237.6" y="245.2" fill="#000" textLength="44.2" lengthAdjust="spacingAndGlyphs">ARMENIA</text>
<text x="440.0" y="322.0" fill="#000" textLength="39.6" lengthAdjust="spacingAndGlyphs">TURKEY</text>
<text x="667.6" y="588.1" fill="#000" textLength="48.2" lengthAdjust="spacingAndGlyphs">LEBANON</text>
<text x="529.4" y="524.4" fill="#000" textLength="40.5" lengthAdjust="spacingAndGlyphs">CYPRUS</text>
<text x="847.2" y="535.3" fill="#000" textLength="30.1" lengthAdjust="spacingAndGlyphs">SYRIA</text>
<text x="1163.3" y="636.0" fill="#000" textLength="24.3" lengthAdjust="spacingAndGlyphs">IRAQ</text>
<text x="202.7" y="222.3" fill="#000" textLength="19.6" lengthAdjust="spacingAndGlyphs">SEA</text>
<text x="205.8" y="232.0" fill="#000" textLength="13.5" lengthAdjust="spacingAndGlyphs">OF</text>
<text x="187.6" y="241.7" fill="#000" textLength="51.6" lengthAdjust="spacingAndGlyphs">MARMARA</text>
</g>
<g clip-path="url(#mc)" stroke="#000" stroke-width="1.6" fill="none">
<path d="M81 143.5 L86 142"/>
<path d="M160.5 140 L166 137"/>
<path d="M108 394 L112 392"/>
<path d="M77 414 L80 413"/>
<path d="M97 419 L101 418"/>
<path d="M116 404 L119 402"/>
<path d="M343 227 L354 227.5"/>
<path d="M421 263 L440 263.5"/>
<path d="M668 413 L676 417"/>
<path d="M670 418 L675 413"/>
<path d="M1212 175 L1217 172"/>
<path d="M1085 183 L1090 181"/>
<path d="M1255 290 L1260 288"/>
</g>
<polygon points="130.5,328.5 161.5,321.9 161.5,324.8 193.2,324.8 193.2,332.2 161.5,332.2 161.5,335.1" fill="none" stroke="#e82828" stroke-width="2.6" stroke-linejoin="miter" stroke-miterlimit="3"/>
<polygon points="267.0,286.8 255.0,279.8 255.0,283.2 241.0,283.2 241.0,290.4 255.0,290.4 255.0,293.8" fill="none" stroke="#e82828" stroke-width="2.6" stroke-linejoin="miter" stroke-miterlimit="3"/>
<polygon points="400.6,314.0 378.5,307.2 378.5,310.4 354.3,310.4 354.3,317.6 378.5,317.6 378.5,320.8" fill="none" stroke="#e82828" stroke-width="2.6" stroke-linejoin="miter" stroke-miterlimit="3"/>
<polygon points="529.6,360.5 510.0,354.8 510.0,357.5 488.4,357.5 488.4,363.5 510.0,363.5 510.0,366.2" fill="none" stroke="#e82828" stroke-width="2.6" stroke-linejoin="miter" stroke-miterlimit="3"/>
<polygon points="656.9,299.5 641.0,294.0 641.0,296.5 625.8,296.5 625.8,302.5 641.0,302.5 641.0,305.0" fill="none" stroke="#e82828" stroke-width="2.6" stroke-linejoin="miter" stroke-miterlimit="3"/>
<polygon points="724.9,372.0 747.0,365.0 747.0,368.4 770.0,368.4 770.0,375.6 747.0,375.6 747.0,379.0" fill="none" stroke="#e82828" stroke-width="2.6" stroke-linejoin="miter" stroke-miterlimit="3"/>
<polygon points="829.0,406.5 814.5,400.8 814.5,403.5 791.6,403.5 791.6,409.5 814.5,409.5 814.5,412.2" fill="none" stroke="#e82828" stroke-width="2.6" stroke-linejoin="miter" stroke-miterlimit="3"/>
<polygon points="887.8,401.3 900.0,395.6 900.0,398.1 916.3,398.1 916.3,404.5 900.0,404.5 900.0,407.0" fill="none" stroke="#e82828" stroke-width="2.6" stroke-linejoin="miter" stroke-miterlimit="3"/>
<polygon points="969.0,319.0 956.0,313.3 956.0,316.0 940.5,316.0 940.5,322.0 956.0,322.0 956.0,324.7" fill="none" stroke="#e82828" stroke-width="2.6" stroke-linejoin="miter" stroke-miterlimit="3"/>
<polygon points="1046.0,316.0 1054.6,310.3 1054.6,313.0 1066.6,313.0 1066.6,319.0 1054.6,319.0 1054.6,321.7" fill="none" stroke="#e82828" stroke-width="2.6" stroke-linejoin="miter" stroke-miterlimit="3"/>
<polygon points="1121.8,314.6 1135.8,307.8 1135.8,311.0 1154.5,311.0 1154.5,318.2 1135.8,318.2 1135.8,321.4" fill="none" stroke="#e82828" stroke-width="2.6" stroke-linejoin="miter" stroke-miterlimit="3"/>
<g shape-rendering="crispEdges">
<ellipse cx="126.4" cy="79.0" rx="6.8" ry="7.7" fill="#800000" stroke="#ffffff" stroke-width="1"/><path d="M3.8 4 Q3.8 8.3 7 8.3 Q10.2 8.3 10.2 4 M7 8.3 V14 M4.8 11.5 H9.2" transform="translate(119.4,71.0)" fill="none" stroke="#ffffff" stroke-width="1"/><circle cx="126.4" cy="75.5" r="1.6" fill="none" stroke="#ffffff" stroke-width="1"/>
<ellipse cx="126.4" cy="95.2" rx="6.8" ry="7.7" fill="#008000" stroke="#c8ffc8" stroke-width="1"/><path d="M6 2.5 V10.5 M6 7.5 L9.5 3.5 M6 7.5 L9.5 9.5" transform="translate(119.4,87.2)" fill="none" stroke="#ffffff" stroke-width="1"/><circle cx="125.4" cy="99.4" r="1.5" fill="none" stroke="#ffffff" stroke-width="1"/>
<ellipse cx="126.4" cy="111.5" rx="6.8" ry="7.7" fill="#800000" stroke="#ffffff" stroke-width="1"/><path d="M2.8 13.5 V2.5 L5 10 L7.2 2.5 V13.5 M11.6 10 Q9.2 9 9.2 11.5 Q9.2 14 11.6 13" transform="translate(119.4,103.5)" fill="none" stroke="#ffffff" stroke-width="1"/>
<ellipse cx="164.3" cy="79.0" rx="6.8" ry="7.7" fill="#0000cc" stroke="#0000cc" stroke-width="1"/><path d="M4.5 2.5 V11.5 M2.8 4.8 H7.2 M4.5 8 Q8 5.5 9.5 8 Q10.5 10.5 8.2 13" transform="translate(157.3,71.0)" fill="none" stroke="#0000a0" stroke-width="1"/>
<ellipse cx="164.3" cy="95.2" rx="6.8" ry="7.7" fill="#000000" stroke="#ffffff" stroke-width="1"/><path d="M3.8 4.3 L10.2 11.7 M10.2 4.3 L3.8 11.7" transform="translate(157.3,87.2)" fill="none" stroke="#ffffff" stroke-width="1"/><circle cx="164.3" cy="95.2" r="4.6" fill="none" stroke="#ffffff" stroke-width="1"/>
<ellipse cx="164.3" cy="111.5" rx="6.8" ry="7.7" fill="#0000cc" stroke="#0000cc" stroke-width="1"/><path d="M2.8 13.5 V2.5 L5 10 L7.2 2.5 V13.5 M11.6 10 Q9.2 9 9.2 11.5 Q9.2 14 11.6 13" transform="translate(157.3,103.5)" fill="none" stroke="#0000a0" stroke-width="1"/>
<ellipse cx="270.4" cy="79.0" rx="6.8" ry="7.7" fill="#800000" stroke="#ffffff" stroke-width="1"/><path d="M4.5 2.5 V11.5 M2.8 4.8 H7.2 M4.5 8 Q8 5.5 9.5 8 Q10.5 10.5 8.2 13" transform="translate(263.4,71.0)" fill="none" stroke="#ffffff" stroke-width="1"/>
<ellipse cx="270.4" cy="95.2" rx="6.8" ry="7.7" fill="#0000cc" stroke="#0000cc" stroke-width="1"/><path d="M4.5 2.5 V11.5 M2.8 4.8 H7.2 M4.5 8 Q8 5.5 9.5 8 Q10.5 10.5 8.2 13" transform="translate(263.4,87.2)" fill="none" stroke="#0000a0" stroke-width="1"/>
<ellipse cx="270.4" cy="111.5" rx="6.8" ry="7.7" fill="#800000" stroke="#ffffff" stroke-width="1"/><path d="M2.8 13.5 V2.5 L5 10 L7.2 2.5 V13.5 M11.6 10 Q9.2 9 9.2 11.5 Q9.2 14 11.6 13" transform="translate(263.4,103.5)" fill="none" stroke="#ffffff" stroke-width="1"/>
<ellipse cx="370.0" cy="79.0" rx="6.8" ry="7.7" fill="#808000" stroke="#ffffc0" stroke-width="1"/><path d="M5 2.5 Q11.5 4 11.5 8 Q11.5 12 5 13.5 Q9 11 9 8 Q9 5 5 2.5Z" transform="translate(363.0,71.0)" fill="none" stroke="#ffffc0" stroke-width="1"/>
<ellipse cx="370.0" cy="95.2" rx="6.8" ry="7.7" fill="#000000" stroke="#ffffff" stroke-width="1"/><path d="M7 3 V13 M2.5 8 H11.5 M3.8 4.8 L10.2 11.2 M10.2 4.8 L3.8 11.2" transform="translate(363.0,87.2)" fill="none" stroke="#ffffff" stroke-width="1"/>
<ellipse cx="370.0" cy="111.5" rx="6.8" ry="7.7" fill="#808000" stroke="#ffffc0" stroke-width="1"/><path d="M2.8 13.5 V2.5 L5 10 L7.2 2.5 V13.5 M11.6 10 Q9.2 9 9.2 11.5 Q9.2 14 11.6 13" transform="translate(363.0,103.5)" fill="none" stroke="#ffffc0" stroke-width="1"/>
<rect x="376.2" y="87.6" width="14" height="15.2" rx="3.5" ry="3.5" fill="#fff" stroke="#000" stroke-width="1"/><path d="M2.5 13.5 L5 2.5 L7.5 13.5 M3.4 9.5 H6.6 M11.5 9.6 Q9 8.6 8.8 10.4 Q9 11.4 10.4 11.6 Q11.8 12 11.4 13 Q10.4 14 8.6 13.2" transform="translate(376.2,87.2)" fill="none" stroke="#000" stroke-width="1"/>
<rect x="376.2" y="103.9" width="14" height="15.2" rx="3.5" ry="3.5" fill="#fff" stroke="#000" stroke-width="1"/><path d="M2.5 13.5 L5 2.5 L7.5 13.5 M3.4 9.5 H6.6 M11.5 9.6 Q9 8.6 8.8 10.4 Q9 11.4 10.4 11.6 Q11.8 12 11.4 13 Q10.4 14 8.6 13.2" transform="translate(376.2,103.5)" fill="none" stroke="#000" stroke-width="1"/>
<ellipse cx="396.5" cy="95.2" rx="6.8" ry="7.7" fill="#000000" stroke="#ffffff" stroke-width="1"/><circle cx="394.3" cy="92.2" r="1.7" fill="none" stroke="#ffffff" stroke-width="1"/><circle cx="398.7" cy="92.2" r="1.7" fill="none" stroke="#ffffff" stroke-width="1"/><ellipse cx="396.5" cy="97.2" rx="3.2" ry="3.4" fill="none" stroke="#ffffff" stroke-width="1.2"/>
<ellipse cx="396.5" cy="111.5" rx="6.8" ry="7.7" fill="#000000" stroke="#ffffff" stroke-width="1"/><path d="M2.8 13.5 V2.5 L5 10 L7.2 2.5 V13.5 M11.6 10 Q9.2 9 9.2 11.5 Q9.2 14 11.6 13" transform="translate(389.5,103.5)" fill="none" stroke="#ffffff" stroke-width="1"/>
<ellipse cx="409.4" cy="79.0" rx="6.8" ry="7.7" fill="#0000cc" stroke="#0000cc" stroke-width="1"/><path d="M4.5 2.5 V11.5 M2.8 4.8 H7.2 M4.5 8 Q8 5.5 9.5 8 Q10.5 10.5 8.2 13" transform="translate(402.4,71.0)" fill="none" stroke="#0000a0" stroke-width="1"/>
<ellipse cx="409.4" cy="95.2" rx="6.8" ry="7.7" fill="#000000" stroke="#ffffff" stroke-width="1"/><path d="M3.8 4 Q3.8 8.3 7 8.3 Q10.2 8.3 10.2 4 M7 8.3 V14 M4.8 11.5 H9.2" transform="translate(402.4,87.2)" fill="none" stroke="#ffffff" stroke-width="1"/><circle cx="409.4" cy="91.7" r="1.6" fill="none" stroke="#ffffff" stroke-width="1"/>
<ellipse cx="409.4" cy="111.5" rx="6.8" ry="7.7" fill="#0000cc" stroke="#0000cc" stroke-width="1"/><path d="M2.8 13.5 V2.5 L5 10 L7.2 2.5 V13.5 M11.6 10 Q9.2 9 9.2 11.5 Q9.2 14 11.6 13" transform="translate(402.4,103.5)" fill="none" stroke="#0000a0" stroke-width="1"/>
<rect x="427.4" y="71.4" width="14" height="15.2" rx="3.5" ry="3.5" fill="#fff" stroke="#000" stroke-width="1"/><path d="M4.6 12 Q2.5 9.5 3.5 6 Q5 3 7 3 Q9 3 10.5 6 Q11.5 9.5 9.4 12" transform="translate(427.4,71.0)" fill="none" stroke="#000" stroke-width="1"/><circle cx="431.0" cy="83.6" r="1.4" fill="none" stroke="#000" stroke-width="1"/><circle cx="437.8" cy="83.6" r="1.4" fill="none" stroke="#000" stroke-width="1"/>
<rect x="427.4" y="87.6" width="14" height="15.2" rx="3.5" ry="3.5" fill="#fff" stroke="#000" stroke-width="1"/><path d="M2.8 13.5 V2.5 L5 10 L7.2 2.5 V13.5 M11.6 10 Q9.2 9 9.2 11.5 Q9.2 14 11.6 13" transform="translate(427.4,87.2)" fill="none" stroke="#000" stroke-width="1"/>
<rect x="427.4" y="103.9" width="14" height="15.2" rx="3.5" ry="3.5" fill="#fff" stroke="#000" stroke-width="1"/><path d="M2.5 13.5 L5 2.5 L7.5 13.5 M3.4 9.5 H6.6 M11.5 9.6 Q9 8.6 8.8 10.4 Q9 11.4 10.4 11.6 Q11.8 12 11.4 13 Q10.4 14 8.6 13.2" transform="translate(427.4,103.5)" fill="none" stroke="#000" stroke-width="1"/>
<ellipse cx="454.6" cy="79.0" rx="6.8" ry="7.7" fill="#000000" stroke="#ffffff" stroke-width="1"/><circle cx="452.4" cy="76.0" r="1.7" fill="none" stroke="#ffffff" stroke-width="1"/><circle cx="456.8" cy="76.0" r="1.7" fill="none" stroke="#ffffff" stroke-width="1"/><ellipse cx="454.6" cy="81.0" rx="3.2" ry="3.4" fill="none" stroke="#ffffff" stroke-width="1.2"/>
<ellipse cx="454.6" cy="95.2" rx="6.8" ry="7.7" fill="#000000" stroke="#ffffff" stroke-width="1"/><path d="M2.8 13.5 V2.5 L5 10 L7.2 2.5 V13.5 M11.6 10 Q9.2 9 9.2 11.5 Q9.2 14 11.6 13" transform="translate(447.6,87.2)" fill="none" stroke="#ffffff" stroke-width="1"/>
<ellipse cx="454.6" cy="111.5" rx="6.8" ry="7.7" fill="#000000" stroke="#ffffff" stroke-width="1"/><path d="M2.8 13.5 V2.5 L5 10 L7.2 2.5 V13.5 M11.6 10 Q9.2 9 9.2 11.5 Q9.2 14 11.6 13" transform="translate(447.6,103.5)" fill="none" stroke="#ffffff" stroke-width="1"/>
<rect x="500.0" y="71.4" width="14" height="15.2" rx="3.5" ry="3.5" fill="#fff" stroke="#000" stroke-width="1"/><path d="M10.6 4.8 Q9.2 3.5 7.2 3.5 Q3.8 3.5 3.8 7.8 Q3.8 11.8 6.9 11.8 M5.2 8.6 H10.6 M6.9 6.2 V14" transform="translate(500.0,71.0)" fill="none" stroke="#000" stroke-width="1"/>
<rect x="500.0" y="87.6" width="14" height="15.2" rx="3.5" ry="3.5" fill="#fff" stroke="#000" stroke-width="1"/><path d="M4.6 2.8 L5.8 4.6 M9.4 2.8 L8.2 4.6 M7 4.6 V13.6 M3.9 8 H10.1 M4 13.6 H10" transform="translate(500.0,87.2)" fill="none" stroke="#000" stroke-width="1"/><circle cx="507.0" cy="95.2" r="3.1" fill="none" stroke="#000" stroke-width="1"/>
<rect x="500.0" y="103.9" width="14" height="15.2" rx="3.5" ry="3.5" fill="#fff" stroke="#000" stroke-width="1"/><path d="M2.5 13.5 L5 2.5 L7.5 13.5 M3.4 9.5 H6.6 M11.5 9.6 Q9 8.6 8.8 10.4 Q9 11.4 10.4 11.6 Q11.8 12 11.4 13 Q10.4 14 8.6 13.2" transform="translate(500.0,103.5)" fill="none" stroke="#000" stroke-width="1"/>
<ellipse cx="520.0" cy="95.2" rx="6.8" ry="7.7" fill="#000000" stroke="#ffffff" stroke-width="1"/><path d="M2.8 13.5 V2.5 L5 10 L7.2 2.5 V13.5 M11.6 10 Q9.2 9 9.2 11.5 Q9.2 14 11.6 13" transform="translate(513.0,87.2)" fill="none" stroke="#ffffff" stroke-width="1"/>
<ellipse cx="520.0" cy="111.5" rx="6.8" ry="7.7" fill="#000000" stroke="#ffffff" stroke-width="1"/><path d="M2.8 13.5 V2.5 L5 10 L7.2 2.5 V13.5 M11.6 10 Q9.2 9 9.2 11.5 Q9.2 14 11.6 13" transform="translate(513.0,103.5)" fill="none" stroke="#ffffff" stroke-width="1"/>
<ellipse cx="535.3" cy="79.0" rx="6.8" ry="7.7" fill="#0000cc" stroke="#0000cc" stroke-width="1"/><path d="M4.5 2.5 V11.5 M2.8 4.8 H7.2 M4.5 8 Q8 5.5 9.5 8 Q10.5 10.5 8.2 13" transform="translate(528.3,71.0)" fill="none" stroke="#0000a0" stroke-width="1"/>
<ellipse cx="535.3" cy="95.2" rx="6.8" ry="7.7" fill="#000000" stroke="#ffffff" stroke-width="1"/><path d="M3.8 4 Q3.8 8.3 7 8.3 Q10.2 8.3 10.2 4 M7 8.3 V14 M4.8 11.5 H9.2" transform="translate(528.3,87.2)" fill="none" stroke="#ffffff" stroke-width="1"/><circle cx="535.3" cy="91.7" r="1.6" fill="none" stroke="#ffffff" stroke-width="1"/>
<ellipse cx="535.3" cy="111.5" rx="6.8" ry="7.7" fill="#0000cc" stroke="#0000cc" stroke-width="1"/><path d="M2.8 13.5 V2.5 L5 10 L7.2 2.5 V13.5 M11.6 10 Q9.2 9 9.2 11.5 Q9.2 14 11.6 13" transform="translate(528.3,103.5)" fill="none" stroke="#0000a0" stroke-width="1"/>
<rect x="542.8" y="71.4" width="14" height="15.2" rx="3.5" ry="3.5" fill="#fff" stroke="#000" stroke-width="1"/><path d="M5 2.5 Q11.5 4 11.5 8 Q11.5 12 5 13.5 Q9 11 9 8 Q9 5 5 2.5Z" transform="translate(542.8,71.0)" fill="none" stroke="#000" stroke-width="1"/>
<rect x="542.8" y="87.6" width="14" height="15.2" rx="3.5" ry="3.5" fill="#fff" stroke="#000" stroke-width="1"/><path d="M7 2.5 V10 M5 4.5 L7 2.5 L9 4.5 M2.5 13.2 L7 9.8 L11.5 13.2 Z" transform="translate(542.8,87.2)" fill="none" stroke="#000" stroke-width="1"/>
<rect x="542.8" y="103.9" width="14" height="15.2" rx="3.5" ry="3.5" fill="#fff" stroke="#000" stroke-width="1"/><path d="M2.5 13.5 L5 2.5 L7.5 13.5 M3.4 9.5 H6.6 M11.5 9.6 Q9 8.6 8.8 10.4 Q9 11.4 10.4 11.6 Q11.8 12 11.4 13 Q10.4 14 8.6 13.2" transform="translate(542.8,103.5)" fill="none" stroke="#000" stroke-width="1"/>
<rect x="605.6" y="71.4" width="14" height="15.2" rx="3.5" ry="3.5" fill="#fff" stroke="#000" stroke-width="1"/><path d="M3.2 4 Q7 2 10.8 4 M7 3 V14 M4.8 7.5 H9.2" transform="translate(605.6,71.0)" fill="none" stroke="#000" stroke-width="1"/>
<rect x="605.6" y="87.6" width="14" height="15.2" rx="3.5" ry="3.5" fill="#fff" stroke="#000" stroke-width="1"/><path d="M4.6 2.8 L5.8 4.6 M9.4 2.8 L8.2 4.6 M7 4.6 V13.6 M3.9 8 H10.1 M4 13.6 H10" transform="translate(605.6,87.2)" fill="none" stroke="#000" stroke-width="1"/><circle cx="612.6" cy="95.2" r="3.1" fill="none" stroke="#000" stroke-width="1"/>
<rect x="605.6" y="103.9" width="14" height="15.2" rx="3.5" ry="3.5" fill="#fff" stroke="#000" stroke-width="1"/><path d="M2.5 13.5 L5 2.5 L7.5 13.5 M3.4 9.5 H6.6 M11.5 9.6 Q9 8.6 8.8 10.4 Q9 11.4 10.4 11.6 Q11.8 12 11.4 13 Q10.4 14 8.6 13.2" transform="translate(605.6,103.5)" fill="none" stroke="#000" stroke-width="1"/>
<ellipse cx="656.0" cy="79.0" rx="6.8" ry="7.7" fill="#800000" stroke="#ffffff" stroke-width="1"/><path d="M4.5 2.5 V11.5 M2.8 4.8 H7.2 M4.5 8 Q8 5.5 9.5 8 Q10.5 10.5 8.2 13" transform="translate(649.0,71.0)" fill="none" stroke="#ffffff" stroke-width="1"/>
<ellipse cx="656.0" cy="95.2" rx="6.8" ry="7.7" fill="#0000cc" stroke="#0000cc" stroke-width="1"/><path d="M4.5 2.5 V11.5 M2.8 4.8 H7.2 M4.5 8 Q8 5.5 9.5 8 Q10.5 10.5 8.2 13" transform="translate(649.0,87.2)" fill="none" stroke="#0000a0" stroke-width="1"/>
<ellipse cx="656.0" cy="111.5" rx="6.8" ry="7.7" fill="#800000" stroke="#ffffff" stroke-width="1"/><path d="M2.8 13.5 V2.5 L5 10 L7.2 2.5 V13.5 M11.6 10 Q9.2 9 9.2 11.5 Q9.2 14 11.6 13" transform="translate(649.0,103.5)" fill="none" stroke="#ffffff" stroke-width="1"/>
<rect x="663.7" y="71.4" width="14" height="15.2" rx="3.5" ry="3.5" fill="#fff" stroke="#000" stroke-width="1"/><path d="M3 3 V9 M11 3 V9 M3 6 H11 M7 3 V10.5" transform="translate(663.7,71.0)" fill="none" stroke="#000" stroke-width="1"/><circle cx="670.7" cy="83.3" r="1.7" fill="none" stroke="#000" stroke-width="1"/>
<rect x="663.7" y="87.6" width="14" height="15.2" rx="3.5" ry="3.5" fill="#fff" stroke="#000" stroke-width="1"/><path d="M7 2.5 V10 M5 4.5 L7 2.5 L9 4.5 M2.5 13.2 L7 9.8 L11.5 13.2 Z" transform="translate(663.7,87.2)" fill="none" stroke="#000" stroke-width="1"/>
<rect x="663.7" y="103.9" width="14" height="15.2" rx="3.5" ry="3.5" fill="#fff" stroke="#000" stroke-width="1"/><path d="M2.5 13.5 L5 2.5 L7.5 13.5 M3.4 9.5 H6.6 M11.5 9.6 Q9 8.6 8.8 10.4 Q9 11.4 10.4 11.6 Q11.8 12 11.4 13 Q10.4 14 8.6 13.2" transform="translate(663.7,103.5)" fill="none" stroke="#000" stroke-width="1"/>
<ellipse cx="722.3" cy="79.0" rx="6.8" ry="7.7" fill="#808000" stroke="#ffffc0" stroke-width="1"/><path d="M5 2.5 Q11.5 4 11.5 8 Q11.5 12 5 13.5 Q9 11 9 8 Q9 5 5 2.5Z" transform="translate(715.3,71.0)" fill="none" stroke="#ffffc0" stroke-width="1"/>
<ellipse cx="722.3" cy="95.2" rx="6.8" ry="7.7" fill="#800000" stroke="#ffffff" stroke-width="1"/><path d="M3.8 4 Q3.8 8.3 7 8.3 Q10.2 8.3 10.2 4 M7 8.3 V14 M4.8 11.5 H9.2" transform="translate(715.3,87.2)" fill="none" stroke="#ffffff" stroke-width="1"/><circle cx="722.3" cy="91.7" r="1.6" fill="none" stroke="#ffffff" stroke-width="1"/>
<ellipse cx="722.3" cy="111.5" rx="6.8" ry="7.7" fill="#808000" stroke="#ffffc0" stroke-width="1"/><path d="M2.8 13.5 V2.5 L5 10 L7.2 2.5 V13.5 M11.6 10 Q9.2 9 9.2 11.5 Q9.2 14 11.6 13" transform="translate(715.3,103.5)" fill="none" stroke="#ffffc0" stroke-width="1"/>
<ellipse cx="759.2" cy="79.0" rx="6.8" ry="7.7" fill="#0000cc" stroke="#0000cc" stroke-width="1"/><path d="M4.5 2.5 V11.5 M2.8 4.8 H7.2 M4.5 8 Q8 5.5 9.5 8 Q10.5 10.5 8.2 13" transform="translate(752.2,71.0)" fill="none" stroke="#0000a0" stroke-width="1"/>
<ellipse cx="759.2" cy="95.2" rx="6.8" ry="7.7" fill="#000000" stroke="#ffffff" stroke-width="1"/><path d="M7 3 V13 M2.5 8 H11.5 M3.8 4.8 L10.2 11.2 M10.2 4.8 L3.8 11.2" transform="translate(752.2,87.2)" fill="none" stroke="#ffffff" stroke-width="1"/>
<ellipse cx="759.2" cy="111.5" rx="6.8" ry="7.7" fill="#0000cc" stroke="#0000cc" stroke-width="1"/><path d="M2.8 13.5 V2.5 L5 10 L7.2 2.5 V13.5 M11.6 10 Q9.2 9 9.2 11.5 Q9.2 14 11.6 13" transform="translate(752.2,103.5)" fill="none" stroke="#0000a0" stroke-width="1"/>
<rect x="796.2" y="71.4" width="14" height="15.2" rx="3.5" ry="3.5" fill="#fff" stroke="#000" stroke-width="1"/><path d="M3.2 3.5 Q3.2 8.5 7 8.5 Q10.8 8.5 10.8 3.5 M7 2.5 V14 M4.8 11.5 H9.2" transform="translate(796.2,71.0)" fill="none" stroke="#000" stroke-width="1"/>
<rect x="796.2" y="87.6" width="14" height="15.2" rx="3.5" ry="3.5" fill="#fff" stroke="#000" stroke-width="1"/><path d="M4.6 12 Q2.5 9.5 3.5 6 Q5 3 7 3 Q9 3 10.5 6 Q11.5 9.5 9.4 12" transform="translate(796.2,87.2)" fill="none" stroke="#000" stroke-width="1"/><circle cx="799.8" cy="99.8" r="1.4" fill="none" stroke="#000" stroke-width="1"/><circle cx="806.6" cy="99.8" r="1.4" fill="none" stroke="#000" stroke-width="1"/>
<rect x="796.2" y="103.9" width="14" height="15.2" rx="3.5" ry="3.5" fill="#fff" stroke="#000" stroke-width="1"/><path d="M2.5 13.5 L5 2.5 L7.5 13.5 M3.4 9.5 H6.6 M11.5 9.6 Q9 8.6 8.8 10.4 Q9 11.4 10.4 11.6 Q11.8 12 11.4 13 Q10.4 14 8.6 13.2" transform="translate(796.2,103.5)" fill="none" stroke="#000" stroke-width="1"/>
<rect x="845.6" y="71.4" width="14" height="15.2" rx="3.5" ry="3.5" fill="#fff" stroke="#000" stroke-width="1"/><path d="M6 2.5 V10.5 M6 7.5 L9.5 3.5 M6 7.5 L9.5 9.5" transform="translate(845.6,71.0)" fill="none" stroke="#000" stroke-width="1"/><circle cx="851.6" cy="83.2" r="1.5" fill="none" stroke="#000" stroke-width="1"/>
<rect x="845.6" y="87.6" width="14" height="15.2" rx="3.5" ry="3.5" fill="#fff" stroke="#000" stroke-width="1"/><path d="M4.6 12 Q2.5 9.5 3.5 6 Q5 3 7 3 Q9 3 10.5 6 Q11.5 9.5 9.4 12" transform="translate(845.6,87.2)" fill="none" stroke="#000" stroke-width="1"/><circle cx="849.2" cy="99.8" r="1.4" fill="none" stroke="#000" stroke-width="1"/><circle cx="856.0" cy="99.8" r="1.4" fill="none" stroke="#000" stroke-width="1"/>
<rect x="845.6" y="103.9" width="14" height="15.2" rx="3.5" ry="3.5" fill="#fff" stroke="#000" stroke-width="1"/><path d="M2.5 13.5 L5 2.5 L7.5 13.5 M3.4 9.5 H6.6 M11.5 9.6 Q9 8.6 8.8 10.4 Q9 11.4 10.4 11.6 Q11.8 12 11.4 13 Q10.4 14 8.6 13.2" transform="translate(845.6,103.5)" fill="none" stroke="#000" stroke-width="1"/>
<ellipse cx="883.4" cy="79.0" rx="6.8" ry="7.7" fill="#800000" stroke="#ffffff" stroke-width="1"/><path d="M3.8 4 Q3.8 8.3 7 8.3 Q10.2 8.3 10.2 4 M7 8.3 V14 M4.8 11.5 H9.2" transform="translate(876.4,71.0)" fill="none" stroke="#ffffff" stroke-width="1"/><circle cx="883.4" cy="75.5" r="1.6" fill="none" stroke="#ffffff" stroke-width="1"/>
<ellipse cx="883.4" cy="95.2" rx="6.8" ry="7.7" fill="#008000" stroke="#c8ffc8" stroke-width="1"/><path d="M6 2.5 V10.5 M6 7.5 L9.5 3.5 M6 7.5 L9.5 9.5" transform="translate(876.4,87.2)" fill="none" stroke="#ffffff" stroke-width="1"/><circle cx="882.4" cy="99.4" r="1.5" fill="none" stroke="#ffffff" stroke-width="1"/>
<ellipse cx="883.4" cy="111.5" rx="6.8" ry="7.7" fill="#800000" stroke="#ffffff" stroke-width="1"/><path d="M2.8 13.5 V2.5 L5 10 L7.2 2.5 V13.5 M11.6 10 Q9.2 9 9.2 11.5 Q9.2 14 11.6 13" transform="translate(876.4,103.5)" fill="none" stroke="#ffffff" stroke-width="1"/>
<ellipse cx="976.3" cy="79.0" rx="6.8" ry="7.7" fill="#008080" stroke="#ffffff" stroke-width="1"/><path d="M3.2 3.5 Q3.2 8.5 7 8.5 Q10.8 8.5 10.8 3.5 M7 2.5 V14 M4.8 11.5 H9.2" transform="translate(969.3,71.0)" fill="none" stroke="#ffffff" stroke-width="1"/>
<ellipse cx="976.3" cy="95.2" rx="6.8" ry="7.7" fill="#000000" stroke="#ffffff" stroke-width="1"/><circle cx="974.1" cy="92.2" r="1.7" fill="none" stroke="#ffffff" stroke-width="1"/><circle cx="978.5" cy="92.2" r="1.7" fill="none" stroke="#ffffff" stroke-width="1"/><ellipse cx="976.3" cy="97.2" rx="3.2" ry="3.4" fill="none" stroke="#ffffff" stroke-width="1.2"/>
<ellipse cx="976.3" cy="111.5" rx="6.8" ry="7.7" fill="#008080" stroke="#ffffff" stroke-width="1"/><path d="M2.8 13.5 V2.5 L5 10 L7.2 2.5 V13.5 M11.6 10 Q9.2 9 9.2 11.5 Q9.2 14 11.6 13" transform="translate(969.3,103.5)" fill="none" stroke="#ffffff" stroke-width="1"/>
<ellipse cx="1039.2" cy="79.0" rx="6.8" ry="7.7" fill="#008080" stroke="#ffffff" stroke-width="1"/><path d="M3.2 3.5 Q3.2 8.5 7 8.5 Q10.8 8.5 10.8 3.5 M7 2.5 V14 M4.8 11.5 H9.2" transform="translate(1032.2,71.0)" fill="none" stroke="#ffffff" stroke-width="1"/>
<ellipse cx="1039.2" cy="95.2" rx="6.8" ry="7.7" fill="#000000" stroke="#ffffff" stroke-width="1"/><path d="M2.8 13.5 V2.5 L5 10 L7.2 2.5 V13.5 M11.6 10 Q9.2 9 9.2 11.5 Q9.2 14 11.6 13" transform="translate(1032.2,87.2)" fill="none" stroke="#ffffff" stroke-width="1"/>
<ellipse cx="1039.2" cy="111.5" rx="6.8" ry="7.7" fill="#008080" stroke="#ffffff" stroke-width="1"/><path d="M2.8 13.5 V2.5 L5 10 L7.2 2.5 V13.5 M11.6 10 Q9.2 9 9.2 11.5 Q9.2 14 11.6 13" transform="translate(1032.2,103.5)" fill="none" stroke="#ffffff" stroke-width="1"/>
<rect x="1045.4" y="71.4" width="14" height="15.2" rx="3.5" ry="3.5" fill="#fff" stroke="#000" stroke-width="1"/><path d="M2.5 13.5 L5 2.5 L7.5 13.5 M3.4 9.5 H6.6 M11.5 9.6 Q9 8.6 8.8 10.4 Q9 11.4 10.4 11.6 Q11.8 12 11.4 13 Q10.4 14 8.6 13.2" transform="translate(1045.4,71.0)" fill="none" stroke="#000" stroke-width="1"/>
<rect x="1045.4" y="87.6" width="14" height="15.2" rx="3.5" ry="3.5" fill="#fff" stroke="#000" stroke-width="1"/><path d="M10.6 4.8 Q9.2 3.5 7.2 3.5 Q3.8 3.5 3.8 7.8 Q3.8 11.8 6.9 11.8 M5.2 8.6 H10.6 M6.9 6.2 V14" transform="translate(1045.4,87.2)" fill="none" stroke="#000" stroke-width="1"/>
<rect x="1045.4" y="103.9" width="14" height="15.2" rx="3.5" ry="3.5" fill="#fff" stroke="#000" stroke-width="1"/><path d="M2.5 13.5 L5 2.5 L7.5 13.5 M3.4 9.5 H6.6 M11.5 9.6 Q9 8.6 8.8 10.4 Q9 11.4 10.4 11.6 Q11.8 12 11.4 13 Q10.4 14 8.6 13.2" transform="translate(1045.4,103.5)" fill="none" stroke="#000" stroke-width="1"/>
<ellipse cx="1111.0" cy="79.0" rx="6.8" ry="7.7" fill="#0000cc" stroke="#0000cc" stroke-width="1"/><path d="M4.5 2.5 V11.5 M2.8 4.8 H7.2 M4.5 8 Q8 5.5 9.5 8 Q10.5 10.5 8.2 13" transform="translate(1104.0,71.0)" fill="none" stroke="#0000a0" stroke-width="1"/>
<ellipse cx="1111.0" cy="95.2" rx="6.8" ry="7.7" fill="#800000" stroke="#ffffff" stroke-width="1"/><path d="M3.8 4 Q3.8 8.3 7 8.3 Q10.2 8.3 10.2 4 M7 8.3 V14 M4.8 11.5 H9.2" transform="translate(1104.0,87.2)" fill="none" stroke="#ffffff" stroke-width="1"/><circle cx="1111.0" cy="91.7" r="1.6" fill="none" stroke="#ffffff" stroke-width="1"/>
<ellipse cx="1111.0" cy="111.5" rx="6.8" ry="7.7" fill="#0000cc" stroke="#0000cc" stroke-width="1"/><path d="M2.8 13.5 V2.5 L5 10 L7.2 2.5 V13.5 M11.6 10 Q9.2 9 9.2 11.5 Q9.2 14 11.6 13" transform="translate(1104.0,103.5)" fill="none" stroke="#0000a0" stroke-width="1"/>
<rect x="1138.4" y="71.4" width="14" height="15.2" rx="3.5" ry="3.5" fill="#fff" stroke="#000" stroke-width="1"/><path d="M2.5 13.5 L5 2.5 L7.5 13.5 M3.4 9.5 H6.6 M11.5 9.6 Q9 8.6 8.8 10.4 Q9 11.4 10.4 11.6 Q11.8 12 11.4 13 Q10.4 14 8.6 13.2" transform="translate(1138.4,71.0)" fill="none" stroke="#000" stroke-width="1"/>
<rect x="1138.4" y="87.6" width="14" height="15.2" rx="3.5" ry="3.5" fill="#fff" stroke="#000" stroke-width="1"/><path d="M3.2 4 Q7 2 10.8 4 M7 3 V14 M4.8 7.5 H9.2" transform="translate(1138.4,87.2)" fill="none" stroke="#000" stroke-width="1"/>
<rect x="1138.4" y="103.9" width="14" height="15.2" rx="3.5" ry="3.5" fill="#fff" stroke="#000" stroke-width="1"/><path d="M2.5 13.5 L5 2.5 L7.5 13.5 M3.4 9.5 H6.6 M11.5 9.6 Q9 8.6 8.8 10.4 Q9 11.4 10.4 11.6 Q11.8 12 11.4 13 Q10.4 14 8.6 13.2" transform="translate(1138.4,103.5)" fill="none" stroke="#000" stroke-width="1"/>
<ellipse cx="1225.5" cy="79.0" rx="6.8" ry="7.7" fill="#000000" stroke="#ffffff" stroke-width="1"/><path d="M3.8 4.3 L10.2 11.7 M10.2 4.3 L3.8 11.7" transform="translate(1218.5,71.0)" fill="none" stroke="#ffffff" stroke-width="1"/><circle cx="1225.5" cy="79.0" r="4.6" fill="none" stroke="#ffffff" stroke-width="1"/>
<ellipse cx="1225.5" cy="95.2" rx="6.8" ry="7.7" fill="#000000" stroke="#ffffff" stroke-width="1"/><path d="M4.6 2.8 L5.8 4.6 M9.4 2.8 L8.2 4.6 M7 4.6 V13.6 M3.9 8 H10.1 M4 13.6 H10" transform="translate(1218.5,87.2)" fill="none" stroke="#ffffff" stroke-width="1"/><circle cx="1225.5" cy="95.2" r="3.1" fill="none" stroke="#ffffff" stroke-width="1"/>
<ellipse cx="1225.5" cy="111.5" rx="6.8" ry="7.7" fill="#000000" stroke="#ffffff" stroke-width="1"/><path d="M2.8 13.5 V2.5 L5 10 L7.2 2.5 V13.5 M11.6 10 Q9.2 9 9.2 11.5 Q9.2 14 11.6 13" transform="translate(1218.5,103.5)" fill="none" stroke="#ffffff" stroke-width="1"/>
<rect x="110.3" y="668.4" width="14" height="15.2" rx="3.5" ry="3.5" fill="#fff" stroke="#000" stroke-width="1"/><path d="M2.5 13.5 L5 2.5 L7.5 13.5 M3.4 9.5 H6.6 M11.5 9.6 Q9 8.6 8.8 10.4 Q9 11.4 10.4 11.6 Q11.8 12 11.4 13 Q10.4 14 8.6 13.2" transform="translate(110.3,668.0)" fill="none" stroke="#000" stroke-width="1"/>
<rect x="110.3" y="684.7" width="14" height="15.2" rx="3.5" ry="3.5" fill="#fff" stroke="#000" stroke-width="1"/><path d="M10.6 4.8 Q9.2 3.5 7.2 3.5 Q3.8 3.5 3.8 7.8 Q3.8 11.8 6.9 11.8 M5.2 8.6 H10.6 M6.9 6.2 V14" transform="translate(110.3,684.3)" fill="none" stroke="#000" stroke-width="1"/>
<rect x="110.3" y="701.0" width="14" height="15.2" rx="3.5" ry="3.5" fill="#fff" stroke="#000" stroke-width="1"/><path d="M3 3 V9 M11 3 V9 M3 6 H11 M7 3 V10.5" transform="translate(110.3,700.6)" fill="none" stroke="#000" stroke-width="1"/><circle cx="117.3" cy="712.9" r="1.7" fill="none" stroke="#000" stroke-width="1"/>
<rect x="134.4" y="668.4" width="14" height="15.2" rx="3.5" ry="3.5" fill="#fff" stroke="#000" stroke-width="1"/><path d="M2.5 13.5 L5 2.5 L7.5 13.5 M3.4 9.5 H6.6 M11.5 9.6 Q9 8.6 8.8 10.4 Q9 11.4 10.4 11.6 Q11.8 12 11.4 13 Q10.4 14 8.6 13.2" transform="translate(134.4,668.0)" fill="none" stroke="#000" stroke-width="1"/>
<rect x="134.4" y="684.7" width="14" height="15.2" rx="3.5" ry="3.5" fill="#fff" stroke="#000" stroke-width="1"/><path d="M7 2.5 V10 M5 4.5 L7 2.5 L9 4.5 M2.5 13.2 L7 9.8 L11.5 13.2 Z" transform="translate(134.4,684.3)" fill="none" stroke="#000" stroke-width="1"/>
<rect x="134.4" y="701.0" width="14" height="15.2" rx="3.5" ry="3.5" fill="#fff" stroke="#000" stroke-width="1"/><path d="M6 2.5 V10.5 M6 7.5 L9.5 3.5 M6 7.5 L9.5 9.5" transform="translate(134.4,700.6)" fill="none" stroke="#000" stroke-width="1"/><circle cx="140.4" cy="712.8" r="1.5" fill="none" stroke="#000" stroke-width="1"/>
<rect x="225.3" y="668.4" width="14" height="15.2" rx="3.5" ry="3.5" fill="#fff" stroke="#000" stroke-width="1"/><path d="M2.5 13.5 L5 2.5 L7.5 13.5 M3.4 9.5 H6.6 M11.5 9.6 Q9 8.6 8.8 10.4 Q9 11.4 10.4 11.6 Q11.8 12 11.4 13 Q10.4 14 8.6 13.2" transform="translate(225.3,668.0)" fill="none" stroke="#000" stroke-width="1"/>
<rect x="225.3" y="684.7" width="14" height="15.2" rx="3.5" ry="3.5" fill="#fff" stroke="#000" stroke-width="1"/><path d="M3.2 4 Q7 2 10.8 4 M7 3 V14 M4.8 7.5 H9.2" transform="translate(225.3,684.3)" fill="none" stroke="#000" stroke-width="1"/>
<rect x="225.3" y="701.0" width="14" height="15.2" rx="3.5" ry="3.5" fill="#fff" stroke="#000" stroke-width="1"/><path d="M3 3 V9 M11 3 V9 M3 6 H11 M7 3 V10.5" transform="translate(225.3,700.6)" fill="none" stroke="#000" stroke-width="1"/><circle cx="232.3" cy="712.9" r="1.7" fill="none" stroke="#000" stroke-width="1"/>
<rect x="272.3" y="668.4" width="14" height="15.2" rx="3.5" ry="3.5" fill="#fff" stroke="#000" stroke-width="1"/><path d="M2.5 13.5 L5 2.5 L7.5 13.5 M3.4 9.5 H6.6 M11.5 9.6 Q9 8.6 8.8 10.4 Q9 11.4 10.4 11.6 Q11.8 12 11.4 13 Q10.4 14 8.6 13.2" transform="translate(272.3,668.0)" fill="none" stroke="#000" stroke-width="1"/>
<rect x="272.3" y="684.7" width="14" height="15.2" rx="3.5" ry="3.5" fill="#fff" stroke="#000" stroke-width="1"/><path d="M4.6 2.8 L5.8 4.6 M9.4 2.8 L8.2 4.6 M7 4.6 V13.6 M3.9 8 H10.1 M4 13.6 H10" transform="translate(272.3,684.3)" fill="none" stroke="#000" stroke-width="1"/><circle cx="279.3" cy="692.3" r="3.1" fill="none" stroke="#000" stroke-width="1"/>
<rect x="272.3" y="701.0" width="14" height="15.2" rx="3.5" ry="3.5" fill="#fff" stroke="#000" stroke-width="1"/><path d="M2.5 13.5 L5 2.5 L7.5 13.5 M3.4 9.5 H6.6 M11.5 9.6 Q9 8.6 8.8 10.4 Q9 11.4 10.4 11.6 Q11.8 12 11.4 13 Q10.4 14 8.6 13.2" transform="translate(272.3,700.6)" fill="none" stroke="#000" stroke-width="1"/>
<rect x="433.1" y="668.4" width="14" height="15.2" rx="3.5" ry="3.5" fill="#fff" stroke="#000" stroke-width="1"/><path d="M2.5 13.5 L5 2.5 L7.5 13.5 M3.4 9.5 H6.6 M11.5 9.6 Q9 8.6 8.8 10.4 Q9 11.4 10.4 11.6 Q11.8 12 11.4 13 Q10.4 14 8.6 13.2" transform="translate(433.1,668.0)" fill="none" stroke="#000" stroke-width="1"/>
<rect x="433.1" y="684.7" width="14" height="15.2" rx="3.5" ry="3.5" fill="#fff" stroke="#000" stroke-width="1"/><path d="M2.8 13.5 V2.5 L5 10 L7.2 2.5 V13.5 M11.6 10 Q9.2 9 9.2 11.5 Q9.2 14 11.6 13" transform="translate(433.1,684.3)" fill="none" stroke="#000" stroke-width="1"/>
<rect x="433.1" y="701.0" width="14" height="15.2" rx="3.5" ry="3.5" fill="#fff" stroke="#000" stroke-width="1"/><path d="M4.6 12 Q2.5 9.5 3.5 6 Q5 3 7 3 Q9 3 10.5 6 Q11.5 9.5 9.4 12" transform="translate(433.1,700.6)" fill="none" stroke="#000" stroke-width="1"/><circle cx="436.7" cy="713.2" r="1.4" fill="none" stroke="#000" stroke-width="1"/><circle cx="443.5" cy="713.2" r="1.4" fill="none" stroke="#000" stroke-width="1"/>
<rect x="742.6" y="668.4" width="14" height="15.2" rx="3.5" ry="3.5" fill="#fff" stroke="#000" stroke-width="1"/><path d="M2.5 13.5 L5 2.5 L7.5 13.5 M3.4 9.5 H6.6 M11.5 9.6 Q9 8.6 8.8 10.4 Q9 11.4 10.4 11.6 Q11.8 12 11.4 13 Q10.4 14 8.6 13.2" transform="translate(742.6,668.0)" fill="none" stroke="#000" stroke-width="1"/>
<rect x="742.6" y="684.7" width="14" height="15.2" rx="3.5" ry="3.5" fill="#fff" stroke="#000" stroke-width="1"/><path d="M7 2.5 V10 M5 4.5 L7 2.5 L9 4.5 M2.5 13.2 L7 9.8 L11.5 13.2 Z" transform="translate(742.6,684.3)" fill="none" stroke="#000" stroke-width="1"/>
<rect x="742.6" y="701.0" width="14" height="15.2" rx="3.5" ry="3.5" fill="#fff" stroke="#000" stroke-width="1"/><path d="M5 2.5 Q11.5 4 11.5 8 Q11.5 12 5 13.5 Q9 11 9 8 Q9 5 5 2.5Z" transform="translate(742.6,700.6)" fill="none" stroke="#000" stroke-width="1"/>
<rect x="840.1" y="668.4" width="14" height="15.2" rx="3.5" ry="3.5" fill="#fff" stroke="#000" stroke-width="1"/><path d="M2.5 13.5 L5 2.5 L7.5 13.5 M3.4 9.5 H6.6 M11.5 9.6 Q9 8.6 8.8 10.4 Q9 11.4 10.4 11.6 Q11.8 12 11.4 13 Q10.4 14 8.6 13.2" transform="translate(840.1,668.0)" fill="none" stroke="#000" stroke-width="1"/>
<rect x="840.1" y="684.7" width="14" height="15.2" rx="3.5" ry="3.5" fill="#fff" stroke="#000" stroke-width="1"/><path d="M2.5 13.5 L5 2.5 L7.5 13.5 M3.4 9.5 H6.6 M11.5 9.6 Q9 8.6 8.8 10.4 Q9 11.4 10.4 11.6 Q11.8 12 11.4 13 Q10.4 14 8.6 13.2" transform="translate(840.1,684.3)" fill="none" stroke="#000" stroke-width="1"/>
<rect x="853.8" y="668.4" width="14" height="15.2" rx="3.5" ry="3.5" fill="#fff" stroke="#000" stroke-width="1"/><path d="M2.5 13.5 L5 2.5 L7.5 13.5 M3.4 9.5 H6.6 M11.5 9.6 Q9 8.6 8.8 10.4 Q9 11.4 10.4 11.6 Q11.8 12 11.4 13 Q10.4 14 8.6 13.2" transform="translate(853.8,668.0)" fill="none" stroke="#000" stroke-width="1"/>
<rect x="853.8" y="684.7" width="14" height="15.2" rx="3.5" ry="3.5" fill="#fff" stroke="#000" stroke-width="1"/><path d="M4.6 12 Q2.5 9.5 3.5 6 Q5 3 7 3 Q9 3 10.5 6 Q11.5 9.5 9.4 12" transform="translate(853.8,684.3)" fill="none" stroke="#000" stroke-width="1"/><circle cx="857.4" cy="696.9" r="1.4" fill="none" stroke="#000" stroke-width="1"/><circle cx="864.2" cy="696.9" r="1.4" fill="none" stroke="#000" stroke-width="1"/>
<rect x="853.8" y="701.0" width="14" height="15.2" rx="3.5" ry="3.5" fill="#fff" stroke="#000" stroke-width="1"/><path d="M3.2 3.5 Q3.2 8.5 7 8.5 Q10.8 8.5 10.8 3.5 M7 2.5 V14 M4.8 11.5 H9.2" transform="translate(853.8,700.6)" fill="none" stroke="#000" stroke-width="1"/>
<rect x="928.2" y="668.4" width="14" height="15.2" rx="3.5" ry="3.5" fill="#fff" stroke="#000" stroke-width="1"/><path d="M2.5 13.5 L5 2.5 L7.5 13.5 M3.4 9.5 H6.6 M11.5 9.6 Q9 8.6 8.8 10.4 Q9 11.4 10.4 11.6 Q11.8 12 11.4 13 Q10.4 14 8.6 13.2" transform="translate(928.2,668.0)" fill="none" stroke="#000" stroke-width="1"/>
<rect x="928.2" y="684.7" width="14" height="15.2" rx="3.5" ry="3.5" fill="#fff" stroke="#000" stroke-width="1"/><path d="M4.6 2.8 L5.8 4.6 M9.4 2.8 L8.2 4.6 M7 4.6 V13.6 M3.9 8 H10.1 M4 13.6 H10" transform="translate(928.2,684.3)" fill="none" stroke="#000" stroke-width="1"/><circle cx="935.2" cy="692.3" r="3.1" fill="none" stroke="#000" stroke-width="1"/>
<rect x="928.2" y="701.0" width="14" height="15.2" rx="3.5" ry="3.5" fill="#fff" stroke="#000" stroke-width="1"/><path d="M10.6 4.8 Q9.2 3.5 7.2 3.5 Q3.8 3.5 3.8 7.8 Q3.8 11.8 6.9 11.8 M5.2 8.6 H10.6 M6.9 6.2 V14" transform="translate(928.2,700.6)" fill="none" stroke="#000" stroke-width="1"/>
<rect x="949.3" y="668.4" width="14" height="15.2" rx="3.5" ry="3.5" fill="#fff" stroke="#000" stroke-width="1"/><path d="M2.5 13.5 L5 2.5 L7.5 13.5 M3.4 9.5 H6.6 M11.5 9.6 Q9 8.6 8.8 10.4 Q9 11.4 10.4 11.6 Q11.8 12 11.4 13 Q10.4 14 8.6 13.2" transform="translate(949.3,668.0)" fill="none" stroke="#000" stroke-width="1"/>
<rect x="949.3" y="684.7" width="14" height="15.2" rx="3.5" ry="3.5" fill="#fff" stroke="#000" stroke-width="1"/><path d="M7 2.5 V10 M5 4.5 L7 2.5 L9 4.5 M2.5 13.2 L7 9.8 L11.5 13.2 Z" transform="translate(949.3,684.3)" fill="none" stroke="#000" stroke-width="1"/>
<rect x="949.3" y="701.0" width="14" height="15.2" rx="3.5" ry="3.5" fill="#fff" stroke="#000" stroke-width="1"/><path d="M3 3 V9 M11 3 V9 M3 6 H11 M7 3 V10.5" transform="translate(949.3,700.6)" fill="none" stroke="#000" stroke-width="1"/><circle cx="956.3" cy="712.9" r="1.7" fill="none" stroke="#000" stroke-width="1"/>
<rect x="990.4" y="668.4" width="14" height="15.2" rx="3.5" ry="3.5" fill="#fff" stroke="#000" stroke-width="1"/><path d="M2.5 13.5 L5 2.5 L7.5 13.5 M3.4 9.5 H6.6 M11.5 9.6 Q9 8.6 8.8 10.4 Q9 11.4 10.4 11.6 Q11.8 12 11.4 13 Q10.4 14 8.6 13.2" transform="translate(990.4,668.0)" fill="none" stroke="#000" stroke-width="1"/>
<rect x="990.4" y="684.7" width="14" height="15.2" rx="3.5" ry="3.5" fill="#fff" stroke="#000" stroke-width="1"/><path d="M4.6 12 Q2.5 9.5 3.5 6 Q5 3 7 3 Q9 3 10.5 6 Q11.5 9.5 9.4 12" transform="translate(990.4,684.3)" fill="none" stroke="#000" stroke-width="1"/><circle cx="994.0" cy="696.9" r="1.4" fill="none" stroke="#000" stroke-width="1"/><circle cx="1000.8" cy="696.9" r="1.4" fill="none" stroke="#000" stroke-width="1"/>
<rect x="990.4" y="701.0" width="14" height="15.2" rx="3.5" ry="3.5" fill="#fff" stroke="#000" stroke-width="1"/><path d="M6 2.5 V10.5 M6 7.5 L9.5 3.5 M6 7.5 L9.5 9.5" transform="translate(990.4,700.6)" fill="none" stroke="#000" stroke-width="1"/><circle cx="996.4" cy="712.8" r="1.5" fill="none" stroke="#000" stroke-width="1"/>
<rect x="1041.2" y="668.4" width="14" height="15.2" rx="3.5" ry="3.5" fill="#fff" stroke="#000" stroke-width="1"/><path d="M2.5 13.5 L5 2.5 L7.5 13.5 M3.4 9.5 H6.6 M11.5 9.6 Q9 8.6 8.8 10.4 Q9 11.4 10.4 11.6 Q11.8 12 11.4 13 Q10.4 14 8.6 13.2" transform="translate(1041.2,668.0)" fill="none" stroke="#000" stroke-width="1"/>
<rect x="1041.2" y="684.7" width="14" height="15.2" rx="3.5" ry="3.5" fill="#fff" stroke="#000" stroke-width="1"/><path d="M4.6 2.8 L5.8 4.6 M9.4 2.8 L8.2 4.6 M7 4.6 V13.6 M3.9 8 H10.1 M4 13.6 H10" transform="translate(1041.2,684.3)" fill="none" stroke="#000" stroke-width="1"/><circle cx="1048.2" cy="692.3" r="3.1" fill="none" stroke="#000" stroke-width="1"/>
<rect x="1041.2" y="701.0" width="14" height="15.2" rx="3.5" ry="3.5" fill="#fff" stroke="#000" stroke-width="1"/><path d="M3.2 4 Q7 2 10.8 4 M7 3 V14 M4.8 7.5 H9.2" transform="translate(1041.2,700.6)" fill="none" stroke="#000" stroke-width="1"/>
<rect x="6.3" y="331.8" width="14" height="15.2" rx="3.5" ry="3.5" fill="#fff" stroke="#000" stroke-width="1"/><path d="M3.2 4 Q7 2 10.8 4 M7 3 V14 M4.8 7.5 H9.2" transform="translate(6.3,331.4)" fill="none" stroke="#000" stroke-width="1"/>
<rect x="19.5" y="331.8" width="14" height="15.2" rx="3.5" ry="3.5" fill="#fff" stroke="#000" stroke-width="1"/><path d="M3 3 V9 M11 3 V9 M3 6 H11 M7 3 V10.5" transform="translate(19.5,331.4)" fill="none" stroke="#000" stroke-width="1"/><circle cx="26.5" cy="343.7" r="1.7" fill="none" stroke="#000" stroke-width="1"/>
<rect x="32.6" y="331.8" width="14" height="15.2" rx="3.5" ry="3.5" fill="#fff" stroke="#000" stroke-width="1"/><path d="M2.5 13.5 L5 2.5 L7.5 13.5 M3.4 9.5 H6.6 M11.5 9.6 Q9 8.6 8.8 10.4 Q9 11.4 10.4 11.6 Q11.8 12 11.4 13 Q10.4 14 8.6 13.2" transform="translate(32.6,331.4)" fill="none" stroke="#000" stroke-width="1"/>
<rect x="6.3" y="354.8" width="14" height="15.2" rx="3.5" ry="3.5" fill="#fff" stroke="#000" stroke-width="1"/><path d="M4.6 2.8 L5.8 4.6 M9.4 2.8 L8.2 4.6 M7 4.6 V13.6 M3.9 8 H10.1 M4 13.6 H10" transform="translate(6.3,354.4)" fill="none" stroke="#000" stroke-width="1"/><circle cx="13.3" cy="362.4" r="3.1" fill="none" stroke="#000" stroke-width="1"/>
<rect x="19.5" y="354.8" width="14" height="15.2" rx="3.5" ry="3.5" fill="#fff" stroke="#000" stroke-width="1"/><path d="M2.5 13.5 L5 2.5 L7.5 13.5 M3.4 9.5 H6.6 M11.5 9.6 Q9 8.6 8.8 10.4 Q9 11.4 10.4 11.6 Q11.8 12 11.4 13 Q10.4 14 8.6 13.2" transform="translate(19.5,354.4)" fill="none" stroke="#000" stroke-width="1"/>
<rect x="32.6" y="354.8" width="14" height="15.2" rx="3.5" ry="3.5" fill="#fff" stroke="#000" stroke-width="1"/><path d="M2.5 13.5 L5 2.5 L7.5 13.5 M3.4 9.5 H6.6 M11.5 9.6 Q9 8.6 8.8 10.4 Q9 11.4 10.4 11.6 Q11.8 12 11.4 13 Q10.4 14 8.6 13.2" transform="translate(32.6,354.4)" fill="none" stroke="#000" stroke-width="1"/>
<rect x="6.3" y="400.9" width="14" height="15.2" rx="3.5" ry="3.5" fill="#fff" stroke="#000" stroke-width="1"/><path d="M7 2.5 V10 M5 4.5 L7 2.5 L9 4.5 M2.5 13.2 L7 9.8 L11.5 13.2 Z" transform="translate(6.3,400.5)" fill="none" stroke="#000" stroke-width="1"/>
<rect x="19.5" y="400.9" width="14" height="15.2" rx="3.5" ry="3.5" fill="#fff" stroke="#000" stroke-width="1"/><path d="M6 2.5 V10.5 M6 7.5 L9.5 3.5 M6 7.5 L9.5 9.5" transform="translate(19.5,400.5)" fill="none" stroke="#000" stroke-width="1"/><circle cx="25.5" cy="412.7" r="1.5" fill="none" stroke="#000" stroke-width="1"/>
<rect x="32.6" y="400.9" width="14" height="15.2" rx="3.5" ry="3.5" fill="#fff" stroke="#000" stroke-width="1"/><path d="M2.5 13.5 L5 2.5 L7.5 13.5 M3.4 9.5 H6.6 M11.5 9.6 Q9 8.6 8.8 10.4 Q9 11.4 10.4 11.6 Q11.8 12 11.4 13 Q10.4 14 8.6 13.2" transform="translate(32.6,400.5)" fill="none" stroke="#000" stroke-width="1"/>
<rect x="6.3" y="528.4" width="14" height="15.2" rx="3.5" ry="3.5" fill="#fff" stroke="#000" stroke-width="1"/><path d="M10.6 4.8 Q9.2 3.5 7.2 3.5 Q3.8 3.5 3.8 7.8 Q3.8 11.8 6.9 11.8 M5.2 8.6 H10.6 M6.9 6.2 V14" transform="translate(6.3,528.0)" fill="none" stroke="#000" stroke-width="1"/>
<rect x="19.5" y="528.4" width="14" height="15.2" rx="3.5" ry="3.5" fill="#fff" stroke="#000" stroke-width="1"/><path d="M3 3 V9 M11 3 V9 M3 6 H11 M7 3 V10.5" transform="translate(19.5,528.0)" fill="none" stroke="#000" stroke-width="1"/><circle cx="26.5" cy="540.3" r="1.7" fill="none" stroke="#000" stroke-width="1"/>
<rect x="32.6" y="528.4" width="14" height="15.2" rx="3.5" ry="3.5" fill="#fff" stroke="#000" stroke-width="1"/><path d="M2.5 13.5 L5 2.5 L7.5 13.5 M3.4 9.5 H6.6 M11.5 9.6 Q9 8.6 8.8 10.4 Q9 11.4 10.4 11.6 Q11.8 12 11.4 13 Q10.4 14 8.6 13.2" transform="translate(32.6,528.0)" fill="none" stroke="#000" stroke-width="1"/>
<rect x="1315.2" y="284.9" width="14" height="15.2" rx="3.5" ry="3.5" fill="#fff" stroke="#000" stroke-width="1"/><path d="M2.5 13.5 L5 2.5 L7.5 13.5 M3.4 9.5 H6.6 M11.5 9.6 Q9 8.6 8.8 10.4 Q9 11.4 10.4 11.6 Q11.8 12 11.4 13 Q10.4 14 8.6 13.2" transform="translate(1315.2,284.5)" fill="none" stroke="#000" stroke-width="1"/>
<rect x="1328.0" y="284.9" width="14" height="15.2" rx="3.5" ry="3.5" fill="#fff" stroke="#000" stroke-width="1"/><path d="M2.5 13.5 L5 2.5 L7.5 13.5 M3.4 9.5 H6.6 M11.5 9.6 Q9 8.6 8.8 10.4 Q9 11.4 10.4 11.6 Q11.8 12 11.4 13 Q10.4 14 8.6 13.2" transform="translate(1328.0,284.5)" fill="none" stroke="#000" stroke-width="1"/>
<rect x="1341.0" y="284.9" width="14" height="15.2" rx="3.5" ry="3.5" fill="#fff" stroke="#000" stroke-width="1"/><path d="M3.2 4 Q7 2 10.8 4 M7 3 V14 M4.8 7.5 H9.2" transform="translate(1341.0,284.5)" fill="none" stroke="#000" stroke-width="1"/>
<rect x="1315.2" y="406.9" width="14" height="15.2" rx="3.5" ry="3.5" fill="#fff" stroke="#000" stroke-width="1"/><path d="M2.5 13.5 L5 2.5 L7.5 13.5 M3.4 9.5 H6.6 M11.5 9.6 Q9 8.6 8.8 10.4 Q9 11.4 10.4 11.6 Q11.8 12 11.4 13 Q10.4 14 8.6 13.2" transform="translate(1315.2,406.5)" fill="none" stroke="#000" stroke-width="1"/>
<rect x="1328.0" y="406.9" width="14" height="15.2" rx="3.5" ry="3.5" fill="#fff" stroke="#000" stroke-width="1"/><path d="M2.5 13.5 L5 2.5 L7.5 13.5 M3.4 9.5 H6.6 M11.5 9.6 Q9 8.6 8.8 10.4 Q9 11.4 10.4 11.6 Q11.8 12 11.4 13 Q10.4 14 8.6 13.2" transform="translate(1328.0,406.5)" fill="none" stroke="#000" stroke-width="1"/>
<rect x="1341.0" y="406.9" width="14" height="15.2" rx="3.5" ry="3.5" fill="#fff" stroke="#000" stroke-width="1"/><path d="M10.6 4.8 Q9.2 3.5 7.2 3.5 Q3.8 3.5 3.8 7.8 Q3.8 11.8 6.9 11.8 M5.2 8.6 H10.6 M6.9 6.2 V14" transform="translate(1341.0,406.5)" fill="none" stroke="#000" stroke-width="1"/>
</g>
</svg>
</body></html>
